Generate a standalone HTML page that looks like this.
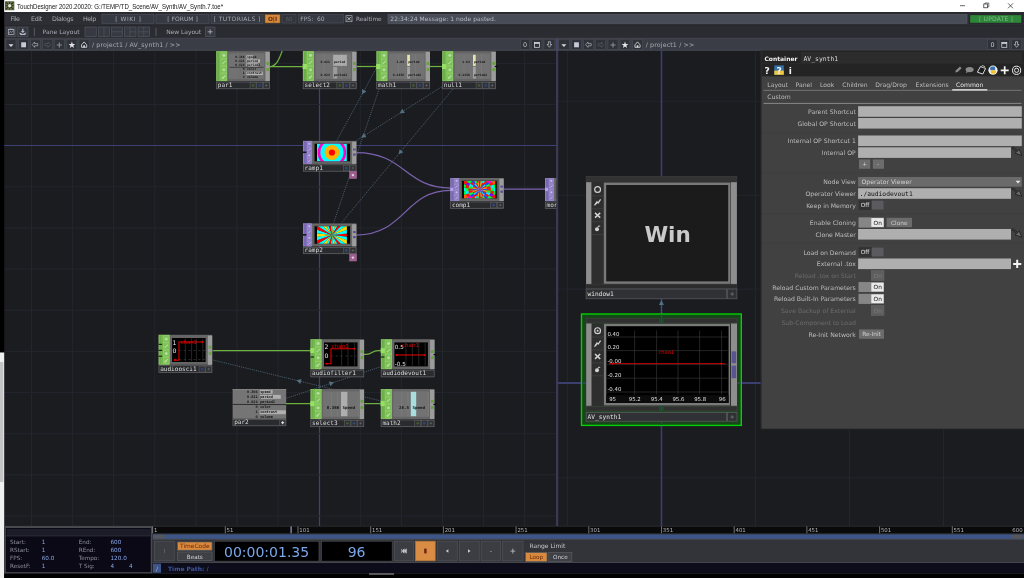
<!DOCTYPE html>
<html><head><meta charset="utf-8"><title>TouchDesigner</title>
<style>
html,body{margin:0;padding:0;background:#1b1c20;overflow:hidden}
svg{display:block;position:absolute;left:0;top:0;will-change:transform}
text{font-family:"DejaVu Sans","Liberation Sans",sans-serif;white-space:pre}
text.m{font-family:"DejaVu Sans Mono","Liberation Mono",monospace}
text.l{font-family:"Liberation Sans","DejaVu Sans",sans-serif}
</style></head><body>
<svg width="1024" height="578" viewBox="0 0 1024 578">
<rect x="0.00" y="0.00" width="1024.00" height="578.00" fill="#1b1c20" />
<g id="grid-left">
<line x1="31.50" y1="50.00" x2="31.50" y2="526.00" stroke="#24262e" stroke-width="1" />
<line x1="72.60" y1="50.00" x2="72.60" y2="526.00" stroke="#24262e" stroke-width="1" />
<line x1="113.70" y1="50.00" x2="113.70" y2="526.00" stroke="#24262e" stroke-width="1" />
<line x1="154.80" y1="50.00" x2="154.80" y2="526.00" stroke="#24262e" stroke-width="1" />
<line x1="195.90" y1="50.00" x2="195.90" y2="526.00" stroke="#24262e" stroke-width="1" />
<line x1="237.00" y1="50.00" x2="237.00" y2="526.00" stroke="#24262e" stroke-width="1" />
<line x1="278.10" y1="50.00" x2="278.10" y2="526.00" stroke="#24262e" stroke-width="1" />
<line x1="319.50" y1="50.00" x2="319.50" y2="526.00" stroke="#3f4078" stroke-width="1.2" />
<line x1="360.30" y1="50.00" x2="360.30" y2="526.00" stroke="#24262e" stroke-width="1" />
<line x1="401.40" y1="50.00" x2="401.40" y2="526.00" stroke="#24262e" stroke-width="1" />
<line x1="442.50" y1="50.00" x2="442.50" y2="526.00" stroke="#24262e" stroke-width="1" />
<line x1="483.60" y1="50.00" x2="483.60" y2="526.00" stroke="#24262e" stroke-width="1" />
<line x1="524.70" y1="50.00" x2="524.70" y2="526.00" stroke="#24262e" stroke-width="1" />
<line x1="4.00" y1="63.42" x2="557.00" y2="63.42" stroke="#24262e" stroke-width="1" />
<line x1="4.00" y1="104.56" x2="557.00" y2="104.56" stroke="#24262e" stroke-width="1" />
<line x1="4.00" y1="145.50" x2="557.00" y2="145.50" stroke="#3f4078" stroke-width="1.2" />
<line x1="4.00" y1="186.84" x2="557.00" y2="186.84" stroke="#24262e" stroke-width="1" />
<line x1="4.00" y1="227.98" x2="557.00" y2="227.98" stroke="#24262e" stroke-width="1" />
<line x1="4.00" y1="269.12" x2="557.00" y2="269.12" stroke="#24262e" stroke-width="1" />
<line x1="4.00" y1="310.26" x2="557.00" y2="310.26" stroke="#24262e" stroke-width="1" />
<line x1="4.00" y1="351.40" x2="557.00" y2="351.40" stroke="#24262e" stroke-width="1" />
<line x1="4.00" y1="392.54" x2="557.00" y2="392.54" stroke="#24262e" stroke-width="1" />
<line x1="4.00" y1="433.68" x2="557.00" y2="433.68" stroke="#24262e" stroke-width="1" />
<line x1="4.00" y1="474.82" x2="557.00" y2="474.82" stroke="#24262e" stroke-width="1" />
<line x1="4.00" y1="515.96" x2="557.00" y2="515.96" stroke="#24262e" stroke-width="1" />
</g>
<g id="grid-right">
<line x1="567.40" y1="50.00" x2="567.40" y2="526.00" stroke="#24262e" stroke-width="1" />
<line x1="755.40" y1="50.00" x2="755.40" y2="526.00" stroke="#24262e" stroke-width="1" />
<line x1="849.50" y1="50.00" x2="849.50" y2="526.00" stroke="#24262e" stroke-width="1" />
<line x1="943.50" y1="50.00" x2="943.50" y2="526.00" stroke="#24262e" stroke-width="1" />
<line x1="557.00" y1="101.20" x2="1024.00" y2="101.20" stroke="#24262e" stroke-width="1" />
<line x1="557.00" y1="195.30" x2="1024.00" y2="195.30" stroke="#24262e" stroke-width="1" />
<line x1="557.00" y1="289.10" x2="1024.00" y2="289.10" stroke="#24262e" stroke-width="1" />
<line x1="557.00" y1="477.80" x2="1024.00" y2="477.80" stroke="#24262e" stroke-width="1" />
<line x1="661.50" y1="50.00" x2="661.50" y2="526.00" stroke="#3b3f70" stroke-width="1.6" />
<line x1="557.00" y1="382.95" x2="1024.00" y2="382.95" stroke="#3b3f70" stroke-width="2" />
<rect x="556.00" y="50.00" width="2.20" height="476.00" fill="#3a3a55" />
</g>
<g id="network">
<line x1="377.00" y1="67.00" x2="336.30" y2="141.50" stroke="#4f6675" stroke-width="0.9" stroke-dasharray="1.1 1.1"/>
<polygon points="362.06,94.35 362.07,89.11 366.46,91.51" fill="#52707f"/>
<line x1="379.10" y1="89.00" x2="333.70" y2="222.70" stroke="#4f6675" stroke-width="0.9" stroke-dasharray="1.1 1.1"/>
<line x1="442.20" y1="86.50" x2="355.80" y2="141.00" stroke="#4f6675" stroke-width="0.9" stroke-dasharray="1.1 1.1"/>
<polygon points="399.65,113.34 402.20,108.77 404.87,113.00" fill="#52707f"/>
<polygon points="361.20,137.59 363.76,133.03 366.42,137.25" fill="#52707f"/>
<line x1="453.00" y1="89.00" x2="341.50" y2="222.70" stroke="#4f6675" stroke-width="0.9" stroke-dasharray="1.1 1.1"/>
<polygon points="398.56,154.27 399.59,149.14 403.43,152.34" fill="#52707f"/>
<line x1="381.00" y1="401.00" x2="213.00" y2="360.00" stroke="#4f6675" stroke-width="0.9" stroke-dasharray="1.1 1.1"/>
<polygon points="296.45,380.36 301.51,379.03 300.32,383.88" fill="#52707f"/>
<line x1="286.50" y1="398.20" x2="380.00" y2="367.00" stroke="#4f6675" stroke-width="0.9" stroke-dasharray="1.1 1.1"/>
<polygon points="334.03,382.34 330.46,386.17 328.87,381.42" fill="#52707f"/>
<line x1="661.40" y1="313.00" x2="661.40" y2="299.00" stroke="#4f6675" stroke-width="0.9" stroke-dasharray="1.1 1.1"/>
<polygon points="661.40,300.34 663.90,304.94 658.90,304.94" fill="#52707f"/>
<path d="M269.6 66.5 H303" fill="none" stroke="#6fb13f" stroke-width="1.25" stroke-linecap="butt"/>
<path d="M269.6 66.5 C276 66.5 279 60 282.3 50.6" fill="none" stroke="#6fb13f" stroke-width="1.25" stroke-linecap="butt"/>
<path d="M356.4 66.5 H376.5" fill="none" stroke="#6fb13f" stroke-width="1.25" stroke-linecap="butt"/>
<path d="M430 66.5 H442.3" fill="none" stroke="#6fb13f" stroke-width="1.25" stroke-linecap="butt"/>
<path d="M212.5 350.6 H310.6" fill="none" stroke="#6fb13f" stroke-width="1.25" stroke-linecap="butt"/>
<path d="M364 354.4 H366 C372.5 354.4 371.5 350.6 378 350.6 H381" fill="none" stroke="#6fb13f" stroke-width="1.25" stroke-linecap="butt"/>
<path d="M286 403.6 H310.6" fill="none" stroke="#6fb13f" stroke-width="1.25" stroke-linecap="butt"/>
<path d="M364.4 403.6 H380.8" fill="none" stroke="#6fb13f" stroke-width="1.25" stroke-linecap="butt"/>
<path d="M356.3 152.6 C405 152.6 405 188 450.5 188" fill="none" stroke="#7b63ae" stroke-width="1.25" stroke-linecap="butt"/>
<path d="M356.3 235 C405 235 405 190.3 450.5 190.3" fill="none" stroke="#7b63ae" stroke-width="1.25" stroke-linecap="butt"/>
<path d="M504 189.2 H545" fill="none" stroke="#7b63ae" stroke-width="1.25" stroke-linecap="butt"/>
<rect x="216.20" y="51.10" width="53.60" height="30.00" fill="#656565" />
<rect x="216.20" y="51.10" width="11.00" height="30.00" fill="#7ec058" />
<rect x="217.30" y="51.90" width="1.80" height="28.40" fill="#6aac46" />
<line x1="220.10" y1="51.10" x2="220.10" y2="81.10" stroke="#6aac46" stroke-width="0.6" />
<rect x="220.90" y="52.00" width="5.90" height="6.60" fill="none" stroke="#9ad474" stroke-width="0.45" />
<circle cx="223.85" cy="55.35" r="1.6" fill="#b4dc9c"/>
<rect x="220.90" y="59.20" width="5.90" height="6.60" fill="none" stroke="#9ad474" stroke-width="0.45" />
<path d="M222.25 64.05 L225.55 60.95" fill="none" stroke="#b4dc9c" stroke-width="1.1" />
<rect x="220.90" y="66.40" width="5.90" height="6.60" fill="none" stroke="#9ad474" stroke-width="0.45" />
<circle cx="223.85" cy="69.75" r="1.5" fill="#b4dc9c"/>
<rect x="220.90" y="73.60" width="5.90" height="6.60" fill="none" stroke="#9ad474" stroke-width="0.45" />
<path d="M222.35 78.45 L225.35 75.45" fill="none" stroke="#b4dc9c" stroke-width="1.3" />
<circle cx="223.05" cy="77.75" r="1" fill="#b4dc9c"/>
<rect x="265.40" y="51.90" width="4.40" height="29.20" fill="#9c9c9c" />
<rect x="266.30" y="62.00" width="2.80" height="2.90" fill="#69a140" />
<rect x="266.30" y="68.10" width="2.80" height="3.00" fill="#69a140" />
<rect x="228.80" y="53.50" width="35.60" height="25.40" fill="#727272" />
<rect x="216.50" y="82.00" width="53.00" height="6.80" fill="#2a2b2e" stroke="#68696c" stroke-width="0.7" />
<rect x="250.10" y="82.40" width="6.00" height="6.00" fill="#303134" stroke="#5c5d60" stroke-width="0.6" />
<circle cx="253.10" cy="85.40" r="1.35" fill="#3f5a2e"/>
<rect x="256.70" y="82.40" width="6.00" height="6.00" fill="#303134" stroke="#5c5d60" stroke-width="0.6" />
<circle cx="259.70" cy="85.40" r="1.35" fill="#2c467c"/>
<rect x="263.30" y="82.40" width="6.00" height="6.00" fill="#303134" stroke="#5c5d60" stroke-width="0.6" />
<path d="M266.30 84.10 V86.70 M265.00 85.40 H267.60" fill="none" stroke="#6e6f73" stroke-width="0.6" />
<text x="217.80" y="87.30" fill="#dcdcdc" text-anchor="start" class="m" style="font-size:6.05px;" >par1</text>
<rect x="246.40" y="55.30" width="6.70" height="3.30" fill="#b4b4b4" />
<text x="244.60" y="57.90" fill="#141414" text-anchor="end" class="m" style="font-size:3.1px;font-weight:bold;" >0.366</text>
<text x="247.00" y="57.90" fill="#141414" text-anchor="start" class="m" style="font-size:3.1px;font-weight:bold;" >speed</text>
<rect x="246.40" y="59.30" width="13.60" height="3.30" fill="#b4b4b4" />
<text x="244.60" y="61.90" fill="#141414" text-anchor="end" class="m" style="font-size:3.1px;font-weight:bold;" >0.821</text>
<text x="247.00" y="61.90" fill="#141414" text-anchor="start" class="m" style="font-size:3.1px;font-weight:bold;" >period</text>
<rect x="246.40" y="63.30" width="12.00" height="3.30" fill="#b4b4b4" />
<text x="244.60" y="65.90" fill="#141414" text-anchor="end" class="m" style="font-size:3.1px;font-weight:bold;" >0.024</text>
<text x="247.00" y="65.90" fill="#141414" text-anchor="start" class="m" style="font-size:3.1px;font-weight:bold;" >period2</text>
<line x1="229.50" y1="67.30" x2="263.50" y2="67.30" stroke="#1a1a1a" stroke-width="0.6" />
<text x="244.60" y="70.20" fill="#141414" text-anchor="end" class="m" style="font-size:3.1px;font-weight:bold;" >0</text>
<text x="247.00" y="70.20" fill="#141414" text-anchor="start" class="m" style="font-size:3.1px;font-weight:bold;" >color</text>
<rect x="246.40" y="71.70" width="16.40" height="3.30" fill="#b4b4b4" />
<text x="244.60" y="74.30" fill="#141414" text-anchor="end" class="m" style="font-size:3.1px;font-weight:bold;" >1</text>
<text x="247.00" y="74.30" fill="#141414" text-anchor="start" class="m" style="font-size:3.1px;font-weight:bold;" >contrast</text>
<text x="244.60" y="78.00" fill="#141414" text-anchor="end" class="m" style="font-size:3.1px;font-weight:bold;" >0</text>
<text x="247.00" y="78.00" fill="#141414" text-anchor="start" class="m" style="font-size:3.1px;font-weight:bold;" >volume</text>
<line x1="240.20" y1="53.60" x2="240.20" y2="79.00" stroke="#6a6a6a" stroke-width="0.5" />
<rect x="302.90" y="51.10" width="53.60" height="30.00" fill="#656565" />
<rect x="302.90" y="51.10" width="11.00" height="30.00" fill="#7ec058" />
<rect x="304.00" y="51.90" width="1.80" height="28.40" fill="#6aac46" />
<line x1="306.80" y1="51.10" x2="306.80" y2="81.10" stroke="#6aac46" stroke-width="0.6" />
<rect x="307.60" y="52.00" width="5.90" height="6.60" fill="none" stroke="#9ad474" stroke-width="0.45" />
<circle cx="310.55" cy="55.35" r="1.6" fill="#b4dc9c"/>
<rect x="307.60" y="59.20" width="5.90" height="6.60" fill="none" stroke="#9ad474" stroke-width="0.45" />
<path d="M308.95 64.05 L312.25 60.95" fill="none" stroke="#b4dc9c" stroke-width="1.1" />
<rect x="307.60" y="66.40" width="5.90" height="6.60" fill="none" stroke="#9ad474" stroke-width="0.45" />
<circle cx="310.55" cy="69.75" r="1.5" fill="#b4dc9c"/>
<rect x="307.60" y="73.60" width="5.90" height="6.60" fill="none" stroke="#9ad474" stroke-width="0.45" />
<path d="M309.05 78.45 L312.05 75.45" fill="none" stroke="#b4dc9c" stroke-width="1.3" />
<circle cx="309.75" cy="77.75" r="1" fill="#b4dc9c"/>
<rect x="352.10" y="51.90" width="4.40" height="29.20" fill="#9c9c9c" />
<rect x="353.00" y="62.00" width="2.80" height="2.90" fill="#69a140" />
<rect x="353.00" y="68.10" width="2.80" height="3.00" fill="#69a140" />
<rect x="315.50" y="53.50" width="35.60" height="25.40" fill="#727272" />
<rect x="302.70" y="64.00" width="4.20" height="5.00" fill="#96e066" />
<rect x="303.20" y="82.00" width="53.00" height="6.80" fill="#2a2b2e" stroke="#68696c" stroke-width="0.7" />
<rect x="336.80" y="82.40" width="6.00" height="6.00" fill="#303134" stroke="#5c5d60" stroke-width="0.6" />
<circle cx="339.80" cy="85.40" r="1.35" fill="#3f5a2e"/>
<rect x="343.40" y="82.40" width="6.00" height="6.00" fill="#303134" stroke="#5c5d60" stroke-width="0.6" />
<circle cx="346.40" cy="85.40" r="1.35" fill="#2c467c"/>
<rect x="350.00" y="82.40" width="6.00" height="6.00" fill="#303134" stroke="#5c5d60" stroke-width="0.6" />
<path d="M353.00 84.10 V86.70 M351.70 85.40 H354.30" fill="none" stroke="#6e6f73" stroke-width="0.6" />
<text x="304.50" y="87.30" fill="#dcdcdc" text-anchor="start" class="m" style="font-size:6.05px;" >select2</text>
<line x1="324.20" y1="54.00" x2="324.20" y2="79.00" stroke="#838383" stroke-width="0.5" />
<line x1="341.50" y1="54.00" x2="341.50" y2="79.00" stroke="#838383" stroke-width="0.5" />
<rect x="333.10" y="54.80" width="13.80" height="11.10" fill="#a9a9a9" />
<rect x="333.10" y="67.00" width="4.10" height="11.60" fill="#9c9c9c" />
<line x1="341.50" y1="54.80" x2="341.50" y2="65.90" stroke="#b6b6b6" stroke-width="0.5" />
<text x="329.80" y="63.30" fill="#141414" text-anchor="end" class="m" style="font-size:3.1px;font-weight:bold;" >0.821</text>
<text x="334.00" y="63.30" fill="#141414" text-anchor="start" class="m" style="font-size:3.1px;font-weight:bold;" >period</text>
<text x="329.80" y="75.50" fill="#141414" text-anchor="end" class="m" style="font-size:3.1px;font-weight:bold;" >0.024</text>
<text x="334.00" y="75.50" fill="#141414" text-anchor="start" class="m" style="font-size:3.1px;font-weight:bold;" >period2</text>
<rect x="376.40" y="51.10" width="53.60" height="30.00" fill="#656565" />
<rect x="376.40" y="51.10" width="11.00" height="30.00" fill="#7ec058" />
<rect x="377.50" y="51.90" width="1.80" height="28.40" fill="#6aac46" />
<line x1="380.30" y1="51.10" x2="380.30" y2="81.10" stroke="#6aac46" stroke-width="0.6" />
<rect x="381.10" y="52.00" width="5.90" height="6.60" fill="none" stroke="#9ad474" stroke-width="0.45" />
<circle cx="384.05" cy="55.35" r="1.6" fill="#b4dc9c"/>
<rect x="381.10" y="59.20" width="5.90" height="6.60" fill="none" stroke="#9ad474" stroke-width="0.45" />
<path d="M382.45 64.05 L385.75 60.95" fill="none" stroke="#b4dc9c" stroke-width="1.1" />
<rect x="381.10" y="66.40" width="5.90" height="6.60" fill="none" stroke="#9ad474" stroke-width="0.45" />
<circle cx="384.05" cy="69.75" r="1.5" fill="#b4dc9c"/>
<rect x="381.10" y="73.60" width="5.90" height="6.60" fill="none" stroke="#9ad474" stroke-width="0.45" />
<path d="M382.55 78.45 L385.55 75.45" fill="none" stroke="#b4dc9c" stroke-width="1.3" />
<circle cx="383.25" cy="77.75" r="1" fill="#b4dc9c"/>
<rect x="425.60" y="51.90" width="4.40" height="29.20" fill="#9c9c9c" />
<rect x="426.50" y="62.00" width="2.80" height="2.90" fill="#69a140" />
<rect x="426.50" y="68.10" width="2.80" height="3.00" fill="#69a140" />
<rect x="389.00" y="53.50" width="35.60" height="25.40" fill="#727272" />
<rect x="376.20" y="64.00" width="4.20" height="5.00" fill="#96e066" />
<rect x="376.70" y="82.00" width="53.00" height="6.80" fill="#2a2b2e" stroke="#68696c" stroke-width="0.7" />
<rect x="410.30" y="82.40" width="6.00" height="6.00" fill="#303134" stroke="#5c5d60" stroke-width="0.6" />
<circle cx="413.30" cy="85.40" r="1.35" fill="#3f5a2e"/>
<rect x="416.90" y="82.40" width="6.00" height="6.00" fill="#303134" stroke="#5c5d60" stroke-width="0.6" />
<circle cx="419.90" cy="85.40" r="1.35" fill="#2c467c"/>
<rect x="423.50" y="82.40" width="6.00" height="6.00" fill="#303134" stroke="#5c5d60" stroke-width="0.6" />
<path d="M426.50 84.10 V86.70 M425.20 85.40 H427.80" fill="none" stroke="#6e6f73" stroke-width="0.6" />
<text x="378.00" y="87.30" fill="#dcdcdc" text-anchor="start" class="m" style="font-size:6.05px;" >math1</text>
<line x1="398.20" y1="54.00" x2="398.20" y2="79.00" stroke="#838383" stroke-width="0.5" />
<line x1="415.60" y1="54.00" x2="415.60" y2="79.00" stroke="#838383" stroke-width="0.5" />
<rect x="407.20" y="54.80" width="2.70" height="11.10" fill="#e6e3b2" />
<rect x="407.20" y="66.80" width="2.70" height="11.80" fill="#a2a2a2" />
<text x="404.00" y="63.30" fill="#141414" text-anchor="end" class="m" style="font-size:3.1px;font-weight:bold;" >1.64</text>
<text x="408.20" y="63.30" fill="#141414" text-anchor="start" class="m" style="font-size:3.1px;font-weight:bold;" >period</text>
<text x="404.00" y="75.50" fill="#141414" text-anchor="end" class="m" style="font-size:3.1px;font-weight:bold;" >0.1436</text>
<text x="408.20" y="75.50" fill="#141414" text-anchor="start" class="m" style="font-size:3.1px;font-weight:bold;" >period2</text>
<rect x="442.20" y="51.10" width="53.60" height="30.00" fill="#656565" />
<rect x="442.20" y="51.10" width="11.00" height="30.00" fill="#7ec058" />
<rect x="443.30" y="51.90" width="1.80" height="28.40" fill="#6aac46" />
<line x1="446.10" y1="51.10" x2="446.10" y2="81.10" stroke="#6aac46" stroke-width="0.6" />
<rect x="446.90" y="52.00" width="5.90" height="6.60" fill="none" stroke="#9ad474" stroke-width="0.45" />
<circle cx="449.85" cy="55.35" r="1.6" fill="#b4dc9c"/>
<rect x="446.90" y="59.20" width="5.90" height="6.60" fill="none" stroke="#9ad474" stroke-width="0.45" />
<path d="M448.25 64.05 L451.55 60.95" fill="none" stroke="#b4dc9c" stroke-width="1.1" />
<rect x="446.90" y="66.40" width="5.90" height="6.60" fill="none" stroke="#9ad474" stroke-width="0.45" />
<circle cx="449.85" cy="69.75" r="1.5" fill="#b4dc9c"/>
<rect x="446.90" y="73.60" width="5.90" height="6.60" fill="none" stroke="#9ad474" stroke-width="0.45" />
<path d="M448.35 78.45 L451.35 75.45" fill="none" stroke="#b4dc9c" stroke-width="1.3" />
<circle cx="449.05" cy="77.75" r="1" fill="#b4dc9c"/>
<rect x="491.40" y="51.90" width="4.40" height="29.20" fill="#9c9c9c" />
<rect x="492.30" y="62.00" width="2.80" height="2.90" fill="#69a140" />
<rect x="492.30" y="68.10" width="2.80" height="3.00" fill="#69a140" />
<rect x="454.80" y="53.50" width="35.60" height="25.40" fill="#727272" />
<rect x="442.00" y="64.00" width="4.20" height="5.00" fill="#96e066" />
<line x1="494.80" y1="66.50" x2="498.00" y2="66.50" stroke="#0a0a0a" stroke-width="1.1" />
<rect x="442.50" y="82.00" width="53.00" height="6.80" fill="#2a2b2e" stroke="#68696c" stroke-width="0.7" />
<rect x="476.10" y="82.40" width="6.00" height="6.00" fill="#303134" stroke="#5c5d60" stroke-width="0.6" />
<circle cx="479.10" cy="85.40" r="1.35" fill="#3f5a2e"/>
<rect x="482.70" y="82.40" width="6.00" height="6.00" fill="#303134" stroke="#5c5d60" stroke-width="0.6" />
<circle cx="485.70" cy="85.40" r="1.35" fill="#2c467c"/>
<rect x="489.30" y="82.40" width="6.00" height="6.00" fill="#303134" stroke="#5c5d60" stroke-width="0.6" />
<path d="M492.30 84.10 V86.70 M491.00 85.40 H493.60" fill="none" stroke="#6e6f73" stroke-width="0.6" />
<text x="443.80" y="87.30" fill="#dcdcdc" text-anchor="start" class="m" style="font-size:6.05px;" >null1</text>
<line x1="464.00" y1="54.00" x2="464.00" y2="79.00" stroke="#838383" stroke-width="0.5" />
<line x1="481.40" y1="54.00" x2="481.40" y2="79.00" stroke="#838383" stroke-width="0.5" />
<rect x="473.00" y="54.80" width="2.70" height="11.10" fill="#e6e3b2" />
<rect x="473.00" y="66.80" width="2.70" height="11.80" fill="#a2a2a2" />
<text x="469.80" y="63.30" fill="#141414" text-anchor="end" class="m" style="font-size:3.1px;font-weight:bold;" >1.64</text>
<text x="474.00" y="63.30" fill="#141414" text-anchor="start" class="m" style="font-size:3.1px;font-weight:bold;" >period</text>
<text x="469.80" y="75.50" fill="#141414" text-anchor="end" class="m" style="font-size:3.1px;font-weight:bold;" >0.1436</text>
<text x="474.00" y="75.50" fill="#141414" text-anchor="start" class="m" style="font-size:3.1px;font-weight:bold;" >period2</text>
<rect x="158.60" y="334.80" width="53.60" height="30.00" fill="#656565" />
<rect x="158.60" y="334.80" width="11.00" height="30.00" fill="#7ec058" />
<rect x="159.70" y="335.60" width="1.80" height="28.40" fill="#6aac46" />
<line x1="162.50" y1="334.80" x2="162.50" y2="364.80" stroke="#6aac46" stroke-width="0.6" />
<rect x="163.30" y="335.70" width="5.90" height="6.60" fill="none" stroke="#9ad474" stroke-width="0.45" />
<circle cx="166.25" cy="339.05" r="1.6" fill="#b4dc9c"/>
<rect x="163.30" y="342.90" width="5.90" height="6.60" fill="none" stroke="#9ad474" stroke-width="0.45" />
<path d="M164.65 347.75 L167.95 344.65" fill="none" stroke="#b4dc9c" stroke-width="1.1" />
<rect x="163.30" y="350.10" width="5.90" height="6.60" fill="none" stroke="#9ad474" stroke-width="0.45" />
<circle cx="166.25" cy="353.45" r="1.5" fill="#b4dc9c"/>
<rect x="163.30" y="357.30" width="5.90" height="6.60" fill="none" stroke="#9ad474" stroke-width="0.45" />
<path d="M164.75 362.15 L167.75 359.15" fill="none" stroke="#b4dc9c" stroke-width="1.3" />
<circle cx="165.45" cy="361.45" r="1" fill="#b4dc9c"/>
<rect x="207.80" y="335.60" width="4.40" height="29.20" fill="#9c9c9c" />
<rect x="208.70" y="345.70" width="2.80" height="2.90" fill="#69a140" />
<rect x="208.70" y="351.80" width="2.80" height="3.00" fill="#69a140" />
<rect x="172.10" y="338.00" width="33.50" height="24.00" fill="#000" />
<line x1="158.60" y1="344.30" x2="162.20" y2="344.30" stroke="#0a0a0a" stroke-width="1" />
<line x1="158.60" y1="350.30" x2="162.20" y2="350.30" stroke="#0a0a0a" stroke-width="1" />
<line x1="158.60" y1="356.20" x2="162.20" y2="356.20" stroke="#0a0a0a" stroke-width="1" />
<rect x="158.90" y="365.70" width="53.00" height="6.80" fill="#2a2b2e" stroke="#68696c" stroke-width="0.7" />
<rect x="199.10" y="366.10" width="6.00" height="6.00" fill="#303134" stroke="#5c5d60" stroke-width="0.6" />
<circle cx="202.10" cy="369.10" r="1.35" fill="#2c467c"/>
<rect x="205.70" y="366.10" width="6.00" height="6.00" fill="#303134" stroke="#5c5d60" stroke-width="0.6" />
<path d="M208.70 367.80 V370.40 M207.40 369.10 H210.00" fill="none" stroke="#6e6f73" stroke-width="0.6" />
<text x="160.20" y="371.00" fill="#dcdcdc" text-anchor="start" class="m" style="font-size:6.05px;" >audioosci1</text>
<line x1="185.30" y1="338.60" x2="185.30" y2="361.40" stroke="#4a4a4a" stroke-width="0.5" />
<line x1="191.60" y1="338.60" x2="191.60" y2="361.40" stroke="#4a4a4a" stroke-width="0.5" />
<line x1="196.40" y1="338.60" x2="196.40" y2="361.40" stroke="#4a4a4a" stroke-width="0.5" />
<line x1="202.80" y1="338.60" x2="202.80" y2="361.40" stroke="#4a4a4a" stroke-width="0.5" />
<line x1="174.00" y1="350.60" x2="205.00" y2="350.60" stroke="#4a4a4a" stroke-width="0.5" stroke-dasharray="2.6 2.2"/>
<line x1="174.00" y1="359.60" x2="205.00" y2="359.60" stroke="#4a4a4a" stroke-width="0.5" stroke-dasharray="2.6 2.2"/>
<text x="174.50" y="344.80" fill="#e8e8e8" text-anchor="middle" style="font-size:6.2px;" >1</text>
<text x="174.50" y="353.00" fill="#e8e8e8" text-anchor="middle" style="font-size:6.2px;" >0</text>
<path d="M174.5 360.1 H179 V342 H202.4" fill="none" stroke="#e00000" stroke-width="1.1" />
<circle cx="174.5" cy="360.1" r="1" fill="#e00000"/><circle cx="202.4" cy="342" r="1" fill="#e00000"/>
<text x="180.50" y="343.60" fill="#e00000" text-anchor="start" style="font-size:5.4px;" >chan1</text>
<rect x="310.50" y="339.20" width="53.60" height="30.00" fill="#656565" />
<rect x="310.50" y="339.20" width="11.00" height="30.00" fill="#7ec058" />
<rect x="311.60" y="340.00" width="1.80" height="28.40" fill="#6aac46" />
<line x1="314.40" y1="339.20" x2="314.40" y2="369.20" stroke="#6aac46" stroke-width="0.6" />
<rect x="315.20" y="340.10" width="5.90" height="6.60" fill="none" stroke="#9ad474" stroke-width="0.45" />
<circle cx="318.15" cy="343.45" r="1.6" fill="#b4dc9c"/>
<rect x="315.20" y="347.30" width="5.90" height="6.60" fill="none" stroke="#9ad474" stroke-width="0.45" />
<path d="M316.55 352.15 L319.85 349.05" fill="none" stroke="#b4dc9c" stroke-width="1.1" />
<rect x="315.20" y="354.50" width="5.90" height="6.60" fill="none" stroke="#9ad474" stroke-width="0.45" />
<circle cx="318.15" cy="357.85" r="1.5" fill="#b4dc9c"/>
<rect x="315.20" y="361.70" width="5.90" height="6.60" fill="none" stroke="#9ad474" stroke-width="0.45" />
<path d="M316.65 366.55 L319.65 363.55" fill="none" stroke="#b4dc9c" stroke-width="1.3" />
<circle cx="317.35" cy="365.85" r="1" fill="#b4dc9c"/>
<rect x="359.70" y="340.00" width="4.40" height="29.20" fill="#9c9c9c" />
<rect x="360.60" y="350.10" width="2.80" height="2.90" fill="#69a140" />
<rect x="360.60" y="356.20" width="2.80" height="3.00" fill="#69a140" />
<rect x="324.00" y="342.40" width="33.50" height="24.00" fill="#000" />
<rect x="310.30" y="348.10" width="4.20" height="5.00" fill="#96e066" />
<line x1="310.50" y1="357.00" x2="314.10" y2="357.00" stroke="#0a0a0a" stroke-width="1" />
<rect x="310.80" y="370.10" width="53.00" height="6.80" fill="#2a2b2e" stroke="#68696c" stroke-width="0.7" />
<text x="312.10" y="375.40" fill="#dcdcdc" text-anchor="start" class="m" style="font-size:6.05px;" >audiofilter1</text>
<line x1="341.60" y1="343.00" x2="341.60" y2="365.70" stroke="#4a4a4a" stroke-width="0.5" />
<line x1="348.00" y1="343.00" x2="348.00" y2="365.70" stroke="#4a4a4a" stroke-width="0.5" />
<line x1="354.60" y1="343.00" x2="354.60" y2="365.70" stroke="#4a4a4a" stroke-width="0.5" />
<line x1="326.00" y1="356.00" x2="356.50" y2="356.00" stroke="#4a4a4a" stroke-width="0.5" stroke-dasharray="2.6 2.2"/>
<text x="326.40" y="349.40" fill="#e8e8e8" text-anchor="middle" style="font-size:6.2px;" >2</text>
<text x="326.40" y="358.40" fill="#e8e8e8" text-anchor="middle" style="font-size:6.2px;" >0</text>
<path d="M326.4 363.8 H331 V348.8 H354.2" fill="none" stroke="#e00000" stroke-width="1.1" />
<circle cx="326.4" cy="363.8" r="1" fill="#e00000"/><circle cx="354.2" cy="348.8" r="1" fill="#e00000"/>
<text x="331.60" y="347.60" fill="#e00000" text-anchor="start" style="font-size:5.6px;" >chan1</text>
<rect x="380.90" y="339.20" width="53.60" height="30.00" fill="#656565" />
<rect x="380.90" y="339.20" width="11.00" height="30.00" fill="#7ec058" />
<rect x="382.00" y="340.00" width="1.80" height="28.40" fill="#6aac46" />
<line x1="384.80" y1="339.20" x2="384.80" y2="369.20" stroke="#6aac46" stroke-width="0.6" />
<rect x="385.60" y="340.10" width="5.90" height="6.60" fill="none" stroke="#9ad474" stroke-width="0.45" />
<circle cx="388.55" cy="343.45" r="1.6" fill="#b4dc9c"/>
<rect x="385.60" y="347.30" width="5.90" height="6.60" fill="none" stroke="#9ad474" stroke-width="0.45" />
<path d="M386.95 352.15 L390.25 349.05" fill="none" stroke="#b4dc9c" stroke-width="1.1" />
<rect x="385.60" y="354.50" width="5.90" height="6.60" fill="none" stroke="#9ad474" stroke-width="0.45" />
<circle cx="388.55" cy="357.85" r="1.5" fill="#b4dc9c"/>
<rect x="385.60" y="361.70" width="5.90" height="6.60" fill="none" stroke="#9ad474" stroke-width="0.45" />
<path d="M387.05 366.55 L390.05 363.55" fill="none" stroke="#b4dc9c" stroke-width="1.3" />
<circle cx="387.75" cy="365.85" r="1" fill="#b4dc9c"/>
<rect x="430.10" y="340.00" width="4.40" height="29.20" fill="#9c9c9c" />
<rect x="431.00" y="350.10" width="2.80" height="2.90" fill="#69a140" />
<rect x="431.00" y="356.20" width="2.80" height="3.00" fill="#69a140" />
<rect x="394.40" y="342.40" width="33.50" height="24.00" fill="#000" />
<rect x="380.70" y="348.10" width="4.20" height="5.00" fill="#96e066" />
<line x1="380.90" y1="357.00" x2="384.50" y2="357.00" stroke="#0a0a0a" stroke-width="1" />
<line x1="433.50" y1="354.60" x2="436.70" y2="354.60" stroke="#0a0a0a" stroke-width="1.1" />
<rect x="381.20" y="370.10" width="53.00" height="6.80" fill="#2a2b2e" stroke="#68696c" stroke-width="0.7" />
<text x="382.50" y="375.40" fill="#dcdcdc" text-anchor="start" class="m" style="font-size:6.05px;" >audiodevout1</text>
<line x1="406.00" y1="343.00" x2="406.00" y2="365.70" stroke="#4a4a4a" stroke-width="0.5" />
<line x1="412.40" y1="343.00" x2="412.40" y2="365.70" stroke="#4a4a4a" stroke-width="0.5" />
<line x1="418.80" y1="343.00" x2="418.80" y2="365.70" stroke="#4a4a4a" stroke-width="0.5" />
<line x1="425.20" y1="343.00" x2="425.20" y2="365.70" stroke="#4a4a4a" stroke-width="0.5" />
<text x="394.80" y="348.60" fill="#e8e8e8" text-anchor="start" style="font-size:5.6px;" >0.5</text>
<text x="394.80" y="366.00" fill="#e8e8e8" text-anchor="start" style="font-size:5.6px;" >-0.5</text>
<path d="M396.6 355 H424.4" fill="none" stroke="#e00000" stroke-width="1.1" />
<circle cx="396.6" cy="355" r="1.1" fill="#e00000"/><circle cx="424.4" cy="355" r="1" fill="#e00000"/>
<text x="402.00" y="347.20" fill="#e00000" text-anchor="start" style="font-size:5.6px;" >chan1</text>
<rect x="232.60" y="389.00" width="53.60" height="29.80" fill="#757575" />
<rect x="232.60" y="389.00" width="53.60" height="0.70" fill="#8a8a8a" />
<rect x="259.60" y="389.90" width="13.00" height="3.90" fill="#b0b0b0" />
<text x="257.60" y="392.90" fill="#141414" text-anchor="end" class="m" style="font-size:3.5px;font-weight:bold;" >0.366</text>
<text x="260.20" y="392.90" fill="#141414" text-anchor="start" class="m" style="font-size:3.5px;font-weight:bold;" >speed</text>
<rect x="259.60" y="394.90" width="21.20" height="3.90" fill="#b0b0b0" />
<text x="257.60" y="397.90" fill="#141414" text-anchor="end" class="m" style="font-size:3.5px;font-weight:bold;" >0.821</text>
<text x="260.20" y="397.90" fill="#141414" text-anchor="start" class="m" style="font-size:3.5px;font-weight:bold;" >period</text>
<text x="257.60" y="402.80" fill="#141414" text-anchor="end" class="m" style="font-size:3.5px;font-weight:bold;" >0.024</text>
<text x="260.20" y="402.80" fill="#141414" text-anchor="start" class="m" style="font-size:3.5px;font-weight:bold;" >period2</text>
<line x1="232.60" y1="404.40" x2="286.20" y2="404.60" stroke="#1c1c1c" stroke-width="0.8" />
<text x="257.60" y="408.00" fill="#141414" text-anchor="end" class="m" style="font-size:3.5px;font-weight:bold;" >0</text>
<text x="260.20" y="408.00" fill="#141414" text-anchor="start" class="m" style="font-size:3.5px;font-weight:bold;" >color</text>
<rect x="259.60" y="410.30" width="26.20" height="3.90" fill="#b0b0b0" />
<text x="257.60" y="413.30" fill="#141414" text-anchor="end" class="m" style="font-size:3.5px;font-weight:bold;" >1</text>
<text x="260.20" y="413.30" fill="#141414" text-anchor="start" class="m" style="font-size:3.5px;font-weight:bold;" >contrast</text>
<text x="257.60" y="418.10" fill="#141414" text-anchor="end" class="m" style="font-size:3.5px;font-weight:bold;" >0</text>
<text x="260.20" y="418.10" fill="#141414" text-anchor="start" class="m" style="font-size:3.5px;font-weight:bold;" >volume</text>
<line x1="259.20" y1="389.60" x2="258.30" y2="418.40" stroke="#686868" stroke-width="0.5" />
<rect x="232.90" y="419.60" width="53.00" height="6.20" fill="#2a2b2e" stroke="#68696c" stroke-width="0.7" />
<rect x="279.70" y="420.00" width="6.00" height="5.40" fill="#303134" stroke="#5c5d60" stroke-width="0.6" />
<path d="M282.70 421.20 V424.20 M281.20 422.70 H284.20" fill="none" stroke="#f0f0f0" stroke-width="1" />
<text x="234.20" y="424.30" fill="#dcdcdc" text-anchor="start" class="m" style="font-size:6.05px;" >par2</text>
<rect x="310.50" y="389.00" width="53.60" height="30.00" fill="#656565" />
<rect x="310.50" y="389.00" width="11.00" height="30.00" fill="#7ec058" />
<rect x="311.60" y="389.80" width="1.80" height="28.40" fill="#6aac46" />
<line x1="314.40" y1="389.00" x2="314.40" y2="419.00" stroke="#6aac46" stroke-width="0.6" />
<rect x="315.20" y="389.90" width="5.90" height="6.60" fill="none" stroke="#9ad474" stroke-width="0.45" />
<circle cx="318.15" cy="393.25" r="1.6" fill="#b4dc9c"/>
<rect x="315.20" y="397.10" width="5.90" height="6.60" fill="none" stroke="#9ad474" stroke-width="0.45" />
<path d="M316.55 401.95 L319.85 398.85" fill="none" stroke="#b4dc9c" stroke-width="1.1" />
<rect x="315.20" y="404.30" width="5.90" height="6.60" fill="none" stroke="#9ad474" stroke-width="0.45" />
<circle cx="318.15" cy="407.65" r="1.5" fill="#b4dc9c"/>
<rect x="315.20" y="411.50" width="5.90" height="6.60" fill="none" stroke="#9ad474" stroke-width="0.45" />
<path d="M316.65 416.35 L319.65 413.35" fill="none" stroke="#b4dc9c" stroke-width="1.3" />
<circle cx="317.35" cy="415.65" r="1" fill="#b4dc9c"/>
<rect x="359.70" y="389.80" width="4.40" height="29.20" fill="#9c9c9c" />
<rect x="360.60" y="399.90" width="2.80" height="2.90" fill="#69a140" />
<rect x="360.60" y="406.00" width="2.80" height="3.00" fill="#69a140" />
<rect x="323.10" y="391.40" width="35.60" height="25.40" fill="#727272" />
<rect x="310.30" y="401.10" width="4.20" height="5.00" fill="#96e066" />
<rect x="310.80" y="419.90" width="53.00" height="6.80" fill="#2a2b2e" stroke="#68696c" stroke-width="0.7" />
<rect x="344.40" y="420.30" width="6.00" height="6.00" fill="#303134" stroke="#5c5d60" stroke-width="0.6" />
<circle cx="347.40" cy="423.30" r="1.35" fill="#3f5a2e"/>
<rect x="351.00" y="420.30" width="6.00" height="6.00" fill="#303134" stroke="#5c5d60" stroke-width="0.6" />
<circle cx="354.00" cy="423.30" r="1.35" fill="#2c467c"/>
<rect x="357.60" y="420.30" width="6.00" height="6.00" fill="#303134" stroke="#5c5d60" stroke-width="0.6" />
<path d="M360.60 422.00 V424.60 M359.30 423.30 H361.90" fill="none" stroke="#6e6f73" stroke-width="0.6" />
<text x="312.10" y="425.20" fill="#dcdcdc" text-anchor="start" class="m" style="font-size:6.05px;" >select3</text>
<line x1="331.30" y1="392.00" x2="331.30" y2="416.50" stroke="#858585" stroke-width="0.5" />
<line x1="337.60" y1="392.00" x2="337.60" y2="416.50" stroke="#858585" stroke-width="0.5" />
<line x1="358.20" y1="392.00" x2="358.20" y2="416.50" stroke="#858585" stroke-width="0.5" />
<rect x="341.00" y="391.80" width="6.40" height="24.40" fill="#aeaeae" />
<text x="339.20" y="409.30" fill="#141414" text-anchor="end" class="m" style="font-size:4.1px;font-weight:bold;" >0.366</text>
<text x="342.60" y="409.30" fill="#141414" text-anchor="start" class="m" style="font-size:4.1px;font-weight:bold;" >Speed</text>
<rect x="380.80" y="389.00" width="53.60" height="30.00" fill="#656565" />
<rect x="380.80" y="389.00" width="11.00" height="30.00" fill="#7ec058" />
<rect x="381.90" y="389.80" width="1.80" height="28.40" fill="#6aac46" />
<line x1="384.70" y1="389.00" x2="384.70" y2="419.00" stroke="#6aac46" stroke-width="0.6" />
<rect x="385.50" y="389.90" width="5.90" height="6.60" fill="none" stroke="#9ad474" stroke-width="0.45" />
<circle cx="388.45" cy="393.25" r="1.6" fill="#b4dc9c"/>
<rect x="385.50" y="397.10" width="5.90" height="6.60" fill="none" stroke="#9ad474" stroke-width="0.45" />
<path d="M386.85 401.95 L390.15 398.85" fill="none" stroke="#b4dc9c" stroke-width="1.1" />
<rect x="385.50" y="404.30" width="5.90" height="6.60" fill="none" stroke="#9ad474" stroke-width="0.45" />
<circle cx="388.45" cy="407.65" r="1.5" fill="#b4dc9c"/>
<rect x="385.50" y="411.50" width="5.90" height="6.60" fill="none" stroke="#9ad474" stroke-width="0.45" />
<path d="M386.95 416.35 L389.95 413.35" fill="none" stroke="#b4dc9c" stroke-width="1.3" />
<circle cx="387.65" cy="415.65" r="1" fill="#b4dc9c"/>
<rect x="430.00" y="389.80" width="4.40" height="29.20" fill="#9c9c9c" />
<rect x="430.90" y="399.90" width="2.80" height="2.90" fill="#69a140" />
<rect x="430.90" y="406.00" width="2.80" height="3.00" fill="#69a140" />
<rect x="393.40" y="391.40" width="35.60" height="25.40" fill="#727272" />
<rect x="380.60" y="401.10" width="4.20" height="5.00" fill="#96e066" />
<line x1="433.40" y1="404.40" x2="436.60" y2="404.40" stroke="#0a0a0a" stroke-width="1.1" />
<rect x="381.10" y="419.90" width="53.00" height="6.80" fill="#2a2b2e" stroke="#68696c" stroke-width="0.7" />
<rect x="414.70" y="420.30" width="6.00" height="6.00" fill="#303134" stroke="#5c5d60" stroke-width="0.6" />
<circle cx="417.70" cy="423.30" r="1.35" fill="#3f5a2e"/>
<rect x="421.30" y="420.30" width="6.00" height="6.00" fill="#303134" stroke="#5c5d60" stroke-width="0.6" />
<circle cx="424.30" cy="423.30" r="1.35" fill="#2c467c"/>
<rect x="427.90" y="420.30" width="6.00" height="6.00" fill="#303134" stroke="#5c5d60" stroke-width="0.6" />
<path d="M430.90 422.00 V424.60 M429.60 423.30 H432.20" fill="none" stroke="#6e6f73" stroke-width="0.6" />
<text x="382.40" y="425.20" fill="#dcdcdc" text-anchor="start" class="m" style="font-size:6.05px;" >math2</text>
<line x1="401.60" y1="392.00" x2="401.60" y2="416.50" stroke="#858585" stroke-width="0.5" />
<line x1="407.90" y1="392.00" x2="407.90" y2="416.50" stroke="#858585" stroke-width="0.5" />
<line x1="428.40" y1="392.00" x2="428.40" y2="416.50" stroke="#858585" stroke-width="0.5" />
<rect x="410.80" y="391.80" width="5.40" height="24.40" fill="#a8dede" />
<text x="408.90" y="409.30" fill="#141414" text-anchor="end" class="m" style="font-size:4.1px;font-weight:bold;" >28.5</text>
<text x="412.60" y="409.30" fill="#141414" text-anchor="start" class="m" style="font-size:4.1px;font-weight:bold;" >Speed</text>
<rect x="303.00" y="140.90" width="53.40" height="23.00" fill="#686868" />
<rect x="303.00" y="140.90" width="8.80" height="23.00" fill="#8d7cc4" />
<rect x="304.00" y="141.70" width="2.20" height="21.40" fill="#7a69b2" />
<line x1="306.80" y1="140.90" x2="306.80" y2="163.90" stroke="#7a69b2" stroke-width="0.5" />
<rect x="307.30" y="141.40" width="4.20" height="4.95" fill="none" stroke="#a797d8" stroke-width="0.4" />
<circle cx="309.30" cy="143.78" r="1.15" fill="#c3b8e6"/>
<rect x="307.30" y="147.15" width="4.20" height="4.95" fill="none" stroke="#a797d8" stroke-width="0.4" />
<path d="M308.10 150.72 L310.60 148.22" fill="none" stroke="#c3b8e6" stroke-width="1" />
<rect x="307.30" y="152.90" width="4.20" height="4.95" fill="none" stroke="#a797d8" stroke-width="0.4" />
<circle cx="309.30" cy="155.28" r="1.15" fill="#c3b8e6"/>
<rect x="307.30" y="158.65" width="4.20" height="4.95" fill="none" stroke="#a797d8" stroke-width="0.4" />
<path d="M308.10 162.22 L310.60 159.72" fill="none" stroke="#c3b8e6" stroke-width="1" />
<rect x="302.70" y="151.50" width="3.70" height="1.60" fill="#17181b" />
<rect x="313.60" y="142.80" width="37.40" height="19.40" fill="#585858" />
<rect x="314.60" y="143.80" width="35.40" height="17.40" fill="#050505" />
<rect x="352.10" y="141.70" width="4.30" height="22.20" fill="#9c9c9c" />
<rect x="353.10" y="148.50" width="2.60" height="2.00" fill="#5d4c9c" />
<rect x="353.10" y="153.50" width="2.60" height="2.20" fill="#5d4c9c" />
<rect x="303.30" y="164.80" width="52.80" height="6.40" fill="#2a2b2e" stroke="#68696c" stroke-width="0.7" />
<rect x="343.30" y="165.20" width="6.00" height="5.60" fill="#303134" stroke="#5c5d60" stroke-width="0.6" />
<circle cx="346.30" cy="168.00" r="1.35" fill="#2f4a86"/>
<rect x="349.90" y="165.20" width="6.00" height="5.60" fill="#303134" stroke="#5c5d60" stroke-width="0.6" />
<path d="M352.90 166.70 V169.30 M351.60 168.00 H354.20" fill="none" stroke="#6e6f73" stroke-width="0.6" />
<text x="304.60" y="169.70" fill="#dcdcdc" text-anchor="start" class="m" style="font-size:6.05px;" >ramp1</text>
<rect x="349.60" y="171.60" width="7.00" height="6.90" fill="#9e5e90" stroke="#a86c9a" stroke-width="0.5" />
<circle cx="352.90" cy="175.10" r="1.2" fill="#e2cede"/>
<clipPath id="c1"><rect x="317.00" y="143.80" width="29.90" height="17.40"/></clipPath>
<g clip-path="url(#c1)">
<rect x="317.00" y="143.80" width="29.90" height="17.40" fill="#00ffff" />
<circle cx="331.95" cy="152.50" r="14.3" fill="#ff00c8"/>
<circle cx="331.95" cy="152.50" r="11.6" fill="#00ffff"/>
<circle cx="331.95" cy="152.50" r="7.4" fill="#ffb000"/>
<circle cx="331.95" cy="152.50" r="3.1" fill="#ff0000"/>
</g>
<rect x="303.00" y="223.40" width="53.40" height="23.00" fill="#686868" />
<rect x="303.00" y="223.40" width="8.80" height="23.00" fill="#8d7cc4" />
<rect x="304.00" y="224.20" width="2.20" height="21.40" fill="#7a69b2" />
<line x1="306.80" y1="223.40" x2="306.80" y2="246.40" stroke="#7a69b2" stroke-width="0.5" />
<rect x="307.30" y="223.90" width="4.20" height="4.95" fill="none" stroke="#a797d8" stroke-width="0.4" />
<circle cx="309.30" cy="226.28" r="1.15" fill="#c3b8e6"/>
<rect x="307.30" y="229.65" width="4.20" height="4.95" fill="none" stroke="#a797d8" stroke-width="0.4" />
<path d="M308.10 233.22 L310.60 230.72" fill="none" stroke="#c3b8e6" stroke-width="1" />
<rect x="307.30" y="235.40" width="4.20" height="4.95" fill="none" stroke="#a797d8" stroke-width="0.4" />
<circle cx="309.30" cy="237.78" r="1.15" fill="#c3b8e6"/>
<rect x="307.30" y="241.15" width="4.20" height="4.95" fill="none" stroke="#a797d8" stroke-width="0.4" />
<path d="M308.10 244.72 L310.60 242.22" fill="none" stroke="#c3b8e6" stroke-width="1" />
<rect x="302.70" y="234.00" width="3.70" height="1.60" fill="#17181b" />
<rect x="313.60" y="225.30" width="37.40" height="19.40" fill="#585858" />
<rect x="314.60" y="226.30" width="35.40" height="17.40" fill="#050505" />
<rect x="352.10" y="224.20" width="4.30" height="22.20" fill="#9c9c9c" />
<rect x="353.10" y="231.00" width="2.60" height="2.00" fill="#5d4c9c" />
<rect x="353.10" y="236.00" width="2.60" height="2.20" fill="#5d4c9c" />
<rect x="303.30" y="247.30" width="52.80" height="6.40" fill="#2a2b2e" stroke="#68696c" stroke-width="0.7" />
<rect x="343.30" y="247.70" width="6.00" height="5.60" fill="#303134" stroke="#5c5d60" stroke-width="0.6" />
<circle cx="346.30" cy="250.50" r="1.35" fill="#2f4a86"/>
<rect x="349.90" y="247.70" width="6.00" height="5.60" fill="#303134" stroke="#5c5d60" stroke-width="0.6" />
<path d="M352.90 249.20 V251.80 M351.60 250.50 H354.20" fill="none" stroke="#6e6f73" stroke-width="0.6" />
<text x="304.60" y="252.20" fill="#dcdcdc" text-anchor="start" class="m" style="font-size:6.05px;" >ramp2</text>
<rect x="349.60" y="254.10" width="7.00" height="6.90" fill="#9e5e90" stroke="#a86c9a" stroke-width="0.5" />
<circle cx="352.90" cy="257.60" r="1.2" fill="#e2cede"/>
<clipPath id="c2"><rect x="317.00" y="226.30" width="29.90" height="17.40"/></clipPath>
<g clip-path="url(#c2)">
<path d="M331.95 235.00 L371.70 230.53 L371.65 239.88 Z" fill="#ff0000"/>
<path d="M331.95 235.00 L371.70 239.49 L369.57 248.60 Z" fill="#00ffff"/>
<path d="M331.95 235.00 L369.70 248.22 L365.60 256.63 Z" fill="#ffd800"/>
<path d="M331.95 235.00 L365.81 256.29 L359.94 263.57 Z" fill="#00ffff"/>
<path d="M331.95 235.00 L360.23 263.29 L352.88 269.08 Z" fill="#ff0000"/>
<path d="M331.95 235.00 L353.22 268.87 L344.78 272.89 Z" fill="#00ffff"/>
<path d="M331.95 235.00 L345.15 272.76 L336.02 274.79 Z" fill="#ffd800"/>
<path d="M331.95 235.00 L336.42 274.75 L327.07 274.70 Z" fill="#00ffff"/>
<path d="M331.95 235.00 L327.46 274.75 L318.35 272.62 Z" fill="#ff0000"/>
<path d="M331.95 235.00 L318.73 272.75 L310.32 268.65 Z" fill="#00ffff"/>
<path d="M331.95 235.00 L310.66 268.86 L303.38 262.99 Z" fill="#ffd800"/>
<path d="M331.95 235.00 L303.66 263.28 L297.87 255.93 Z" fill="#00ffff"/>
<path d="M331.95 235.00 L298.08 256.27 L294.06 247.83 Z" fill="#ff0000"/>
<path d="M331.95 235.00 L294.19 248.20 L292.16 239.07 Z" fill="#00ffff"/>
<path d="M331.95 235.00 L292.20 239.47 L292.25 230.12 Z" fill="#ffd800"/>
<path d="M331.95 235.00 L292.20 230.51 L294.33 221.40 Z" fill="#00ffff"/>
<path d="M331.95 235.00 L294.20 221.78 L298.30 213.37 Z" fill="#ff0000"/>
<path d="M331.95 235.00 L298.09 213.71 L303.96 206.43 Z" fill="#00ffff"/>
<path d="M331.95 235.00 L303.67 206.71 L311.02 200.92 Z" fill="#ffd800"/>
<path d="M331.95 235.00 L310.68 201.13 L319.12 197.11 Z" fill="#00ffff"/>
<path d="M331.95 235.00 L318.75 197.24 L327.88 195.21 Z" fill="#ff0000"/>
<path d="M331.95 235.00 L327.48 195.25 L336.83 195.30 Z" fill="#00ffff"/>
<path d="M331.95 235.00 L336.44 195.25 L345.55 197.38 Z" fill="#ffd800"/>
<path d="M331.95 235.00 L345.17 197.25 L353.58 201.35 Z" fill="#00ffff"/>
<path d="M331.95 235.00 L353.24 201.14 L360.52 207.01 Z" fill="#ff0000"/>
<path d="M331.95 235.00 L360.24 206.72 L366.03 214.07 Z" fill="#00ffff"/>
<path d="M331.95 235.00 L365.82 213.73 L369.84 222.17 Z" fill="#ffd800"/>
<path d="M331.95 235.00 L369.71 221.80 L371.74 230.93 Z" fill="#00ffff"/>
</g>
<rect x="450.30" y="178.00" width="53.40" height="23.00" fill="#686868" />
<rect x="450.30" y="178.00" width="8.80" height="23.00" fill="#8d7cc4" />
<rect x="451.30" y="178.80" width="2.20" height="21.40" fill="#7a69b2" />
<line x1="454.10" y1="178.00" x2="454.10" y2="201.00" stroke="#7a69b2" stroke-width="0.5" />
<rect x="454.60" y="178.50" width="4.20" height="4.95" fill="none" stroke="#a797d8" stroke-width="0.4" />
<circle cx="456.60" cy="180.88" r="1.15" fill="#c3b8e6"/>
<rect x="454.60" y="184.25" width="4.20" height="4.95" fill="none" stroke="#a797d8" stroke-width="0.4" />
<path d="M455.40 187.82 L457.90 185.32" fill="none" stroke="#c3b8e6" stroke-width="1" />
<rect x="454.60" y="190.00" width="4.20" height="4.95" fill="none" stroke="#a797d8" stroke-width="0.4" />
<circle cx="456.60" cy="192.38" r="1.15" fill="#c3b8e6"/>
<rect x="454.60" y="195.75" width="4.20" height="4.95" fill="none" stroke="#a797d8" stroke-width="0.4" />
<path d="M455.40 199.32 L457.90 196.82" fill="none" stroke="#c3b8e6" stroke-width="1" />
<rect x="450.30" y="187.70" width="3.00" height="3.40" fill="#b3a2ea" />
<rect x="460.90" y="179.90" width="37.40" height="19.40" fill="#585858" />
<rect x="462.10" y="180.90" width="34.60" height="17.40" fill="#050505" />
<rect x="499.40" y="178.80" width="4.30" height="22.20" fill="#9c9c9c" />
<rect x="500.40" y="185.60" width="2.60" height="2.00" fill="#5d4c9c" />
<rect x="500.40" y="190.60" width="2.60" height="2.20" fill="#5d4c9c" />
<rect x="450.60" y="201.90" width="52.80" height="6.40" fill="#2a2b2e" stroke="#68696c" stroke-width="0.7" />
<rect x="490.60" y="202.30" width="6.00" height="5.60" fill="#303134" stroke="#5c5d60" stroke-width="0.6" />
<circle cx="493.60" cy="205.10" r="1.35" fill="#2f4a86"/>
<rect x="497.20" y="202.30" width="6.00" height="5.60" fill="#303134" stroke="#5c5d60" stroke-width="0.6" />
<path d="M500.20 203.80 V206.40 M498.90 205.10 H501.50" fill="none" stroke="#6e6f73" stroke-width="0.6" />
<text x="451.90" y="206.80" fill="#dcdcdc" text-anchor="start" class="m" style="font-size:6.05px;" >comp1</text>
<clipPath id="c3"><rect x="464.00" y="180.90" width="31.30" height="17.40"/></clipPath>
<g clip-path="url(#c3)">
<path d="M479.65 189.60 L519.40 185.13 A40 40 0 0 1 519.34 194.56 Z" fill="#00f0ff"/>
<path d="M479.65 189.60 L519.40 194.09 A40 40 0 0 1 517.24 203.27 Z" fill="#00ff30"/>
<path d="M479.65 189.60 L517.40 202.82 A40 40 0 0 1 513.26 211.29 Z" fill="#ff1010"/>
<path d="M479.65 189.60 L513.51 210.89 A40 40 0 0 1 507.59 218.23 Z" fill="#00ff30"/>
<path d="M479.65 189.60 L507.93 217.89 A40 40 0 0 1 500.52 223.73 Z" fill="#00f0ff"/>
<path d="M479.65 189.60 L500.92 223.47 A40 40 0 0 1 492.40 227.51 Z" fill="#ff5a00"/>
<path d="M479.65 189.60 L492.85 227.36 A40 40 0 0 1 483.64 229.40 Z" fill="#00ff30"/>
<path d="M479.65 189.60 L484.12 229.35 A40 40 0 0 1 474.69 229.29 Z" fill="#00f0ff"/>
<path d="M479.65 189.60 L475.16 229.35 A40 40 0 0 1 465.98 227.19 Z" fill="#00ff30"/>
<path d="M479.65 189.60 L466.43 227.35 A40 40 0 0 1 457.96 223.21 Z" fill="#ff1010"/>
<path d="M479.65 189.60 L458.36 223.46 A40 40 0 0 1 451.02 217.54 Z" fill="#00ff30"/>
<path d="M479.65 189.60 L451.36 217.88 A40 40 0 0 1 445.52 210.47 Z" fill="#00f0ff"/>
<path d="M479.65 189.60 L445.78 210.87 A40 40 0 0 1 441.74 202.35 Z" fill="#ff5a00"/>
<path d="M479.65 189.60 L441.89 202.80 A40 40 0 0 1 439.85 193.59 Z" fill="#00ff30"/>
<path d="M479.65 189.60 L439.90 194.07 A40 40 0 0 1 439.96 184.64 Z" fill="#00f0ff"/>
<path d="M479.65 189.60 L439.90 185.11 A40 40 0 0 1 442.06 175.93 Z" fill="#00ff30"/>
<path d="M479.65 189.60 L441.90 176.38 A40 40 0 0 1 446.04 167.91 Z" fill="#ff1010"/>
<path d="M479.65 189.60 L445.79 168.31 A40 40 0 0 1 451.71 160.97 Z" fill="#00ff30"/>
<path d="M479.65 189.60 L451.37 161.31 A40 40 0 0 1 458.78 155.47 Z" fill="#00f0ff"/>
<path d="M479.65 189.60 L458.38 155.73 A40 40 0 0 1 466.90 151.69 Z" fill="#ff5a00"/>
<path d="M479.65 189.60 L466.45 151.84 A40 40 0 0 1 475.66 149.80 Z" fill="#00ff30"/>
<path d="M479.65 189.60 L475.18 149.85 A40 40 0 0 1 484.61 149.91 Z" fill="#00f0ff"/>
<path d="M479.65 189.60 L484.14 149.85 A40 40 0 0 1 493.32 152.01 Z" fill="#00ff30"/>
<path d="M479.65 189.60 L492.87 151.85 A40 40 0 0 1 501.34 155.99 Z" fill="#ff1010"/>
<path d="M479.65 189.60 L500.94 155.74 A40 40 0 0 1 508.28 161.66 Z" fill="#00ff30"/>
<path d="M479.65 189.60 L507.94 161.32 A40 40 0 0 1 513.78 168.73 Z" fill="#00f0ff"/>
<path d="M479.65 189.60 L513.52 168.33 A40 40 0 0 1 517.56 176.85 Z" fill="#ff5a00"/>
<path d="M479.65 189.60 L517.41 176.40 A40 40 0 0 1 519.45 185.61 Z" fill="#00ff30"/>
<path d="M479.65 189.60 L493.96 187.99 A14.4 14.4 0 0 1 493.94 191.39 Z" fill="#00ff30"/>
<path d="M479.65 189.60 L493.96 191.22 A14.4 14.4 0 0 1 493.18 194.52 Z" fill="#ff1010"/>
<path d="M479.65 189.60 L493.24 194.36 A14.4 14.4 0 0 1 491.75 197.41 Z" fill="#6a10ff"/>
<path d="M479.65 189.60 L491.84 197.26 A14.4 14.4 0 0 1 489.71 199.91 Z" fill="#00ff30"/>
<path d="M479.65 189.60 L489.83 199.78 A14.4 14.4 0 0 1 487.16 201.89 Z" fill="#ff00d0"/>
<path d="M479.65 189.60 L487.31 201.79 A14.4 14.4 0 0 1 484.24 203.25 Z" fill="#ff1010"/>
<path d="M479.65 189.60 L484.40 203.19 A14.4 14.4 0 0 1 481.09 203.93 Z" fill="#00f0ff"/>
<path d="M479.65 189.60 L481.26 203.91 A14.4 14.4 0 0 1 477.86 203.89 Z" fill="#00ff30"/>
<path d="M479.65 189.60 L478.03 203.91 A14.4 14.4 0 0 1 474.73 203.13 Z" fill="#ff1010"/>
<path d="M479.65 189.60 L474.89 203.19 A14.4 14.4 0 0 1 471.84 201.70 Z" fill="#6a10ff"/>
<path d="M479.65 189.60 L471.99 201.79 A14.4 14.4 0 0 1 469.34 199.66 Z" fill="#00ff30"/>
<path d="M479.65 189.60 L469.47 199.78 A14.4 14.4 0 0 1 467.36 197.11 Z" fill="#ff00d0"/>
<path d="M479.65 189.60 L467.46 197.26 A14.4 14.4 0 0 1 466.00 194.19 Z" fill="#ff1010"/>
<path d="M479.65 189.60 L466.06 194.35 A14.4 14.4 0 0 1 465.32 191.04 Z" fill="#00f0ff"/>
<path d="M479.65 189.60 L465.34 191.21 A14.4 14.4 0 0 1 465.36 187.81 Z" fill="#00ff30"/>
<path d="M479.65 189.60 L465.34 187.98 A14.4 14.4 0 0 1 466.12 184.68 Z" fill="#ff1010"/>
<path d="M479.65 189.60 L466.06 184.84 A14.4 14.4 0 0 1 467.55 181.79 Z" fill="#6a10ff"/>
<path d="M479.65 189.60 L467.46 181.94 A14.4 14.4 0 0 1 469.59 179.29 Z" fill="#00ff30"/>
<path d="M479.65 189.60 L469.47 179.42 A14.4 14.4 0 0 1 472.14 177.31 Z" fill="#ff00d0"/>
<path d="M479.65 189.60 L471.99 177.41 A14.4 14.4 0 0 1 475.06 175.95 Z" fill="#ff1010"/>
<path d="M479.65 189.60 L474.90 176.01 A14.4 14.4 0 0 1 478.21 175.27 Z" fill="#00f0ff"/>
<path d="M479.65 189.60 L478.04 175.29 A14.4 14.4 0 0 1 481.44 175.31 Z" fill="#00ff30"/>
<path d="M479.65 189.60 L481.27 175.29 A14.4 14.4 0 0 1 484.57 176.07 Z" fill="#ff1010"/>
<path d="M479.65 189.60 L484.41 176.01 A14.4 14.4 0 0 1 487.46 177.50 Z" fill="#6a10ff"/>
<path d="M479.65 189.60 L487.31 177.41 A14.4 14.4 0 0 1 489.96 179.54 Z" fill="#00ff30"/>
<path d="M479.65 189.60 L489.83 179.42 A14.4 14.4 0 0 1 491.94 182.09 Z" fill="#ff00d0"/>
<path d="M479.65 189.60 L491.84 181.94 A14.4 14.4 0 0 1 493.30 185.01 Z" fill="#ff1010"/>
<path d="M479.65 189.60 L493.24 184.85 A14.4 14.4 0 0 1 493.98 188.16 Z" fill="#00f0ff"/>
<path d="M479.65 189.60 L490.78 188.35 A11.2 11.2 0 0 1 490.76 190.99 Z" fill="#ff1010"/>
<path d="M479.65 189.60 L490.78 190.86 A11.2 11.2 0 0 1 490.18 193.43 Z" fill="#00ff30"/>
<path d="M479.65 189.60 L490.22 193.30 A11.2 11.2 0 0 1 489.06 195.67 Z" fill="#00f0ff"/>
<path d="M479.65 189.60 L489.13 195.56 A11.2 11.2 0 0 1 487.47 197.62 Z" fill="#ff1010"/>
<path d="M479.65 189.60 L487.57 197.52 A11.2 11.2 0 0 1 485.49 199.16 Z" fill="#2040ff"/>
<path d="M479.65 189.60 L485.61 199.08 A11.2 11.2 0 0 1 483.22 200.22 Z" fill="#00ff30"/>
<path d="M479.65 189.60 L483.35 200.17 A11.2 11.2 0 0 1 480.77 200.74 Z" fill="#ff1010"/>
<path d="M479.65 189.60 L480.90 200.73 A11.2 11.2 0 0 1 478.26 200.71 Z" fill="#ff1010"/>
<path d="M479.65 189.60 L478.39 200.73 A11.2 11.2 0 0 1 475.82 200.13 Z" fill="#00ff30"/>
<path d="M479.65 189.60 L475.95 200.17 A11.2 11.2 0 0 1 473.58 199.01 Z" fill="#00f0ff"/>
<path d="M479.65 189.60 L473.69 199.08 A11.2 11.2 0 0 1 471.63 197.42 Z" fill="#ff1010"/>
<path d="M479.65 189.60 L471.73 197.52 A11.2 11.2 0 0 1 470.09 195.44 Z" fill="#2040ff"/>
<path d="M479.65 189.60 L470.17 195.56 A11.2 11.2 0 0 1 469.03 193.17 Z" fill="#00ff30"/>
<path d="M479.65 189.60 L469.08 193.30 A11.2 11.2 0 0 1 468.51 190.72 Z" fill="#ff1010"/>
<path d="M479.65 189.60 L468.52 190.85 A11.2 11.2 0 0 1 468.54 188.21 Z" fill="#ff1010"/>
<path d="M479.65 189.60 L468.52 188.34 A11.2 11.2 0 0 1 469.12 185.77 Z" fill="#00ff30"/>
<path d="M479.65 189.60 L469.08 185.90 A11.2 11.2 0 0 1 470.24 183.53 Z" fill="#00f0ff"/>
<path d="M479.65 189.60 L470.17 183.64 A11.2 11.2 0 0 1 471.83 181.58 Z" fill="#ff1010"/>
<path d="M479.65 189.60 L471.73 181.68 A11.2 11.2 0 0 1 473.81 180.04 Z" fill="#2040ff"/>
<path d="M479.65 189.60 L473.69 180.12 A11.2 11.2 0 0 1 476.08 178.98 Z" fill="#00ff30"/>
<path d="M479.65 189.60 L475.95 179.03 A11.2 11.2 0 0 1 478.53 178.46 Z" fill="#ff1010"/>
<path d="M479.65 189.60 L478.40 178.47 A11.2 11.2 0 0 1 481.04 178.49 Z" fill="#ff1010"/>
<path d="M479.65 189.60 L480.91 178.47 A11.2 11.2 0 0 1 483.48 179.07 Z" fill="#00ff30"/>
<path d="M479.65 189.60 L483.35 179.03 A11.2 11.2 0 0 1 485.72 180.19 Z" fill="#00f0ff"/>
<path d="M479.65 189.60 L485.61 180.12 A11.2 11.2 0 0 1 487.67 181.78 Z" fill="#ff1010"/>
<path d="M479.65 189.60 L487.57 181.68 A11.2 11.2 0 0 1 489.21 183.76 Z" fill="#2040ff"/>
<path d="M479.65 189.60 L489.13 183.64 A11.2 11.2 0 0 1 490.27 186.03 Z" fill="#00ff30"/>
<path d="M479.65 189.60 L490.22 185.90 A11.2 11.2 0 0 1 490.79 188.48 Z" fill="#ff1010"/>
<path d="M479.65 189.60 L486.90 188.78 A7.3 7.3 0 0 1 486.89 190.51 Z" fill="#2040ff"/>
<path d="M479.65 189.60 L486.90 190.42 A7.3 7.3 0 0 1 486.51 192.09 Z" fill="#ffa000"/>
<path d="M479.65 189.60 L486.54 192.01 A7.3 7.3 0 0 1 485.78 193.56 Z" fill="#ff1010"/>
<path d="M479.65 189.60 L485.83 193.49 A7.3 7.3 0 0 1 484.75 194.82 Z" fill="#2040ff"/>
<path d="M479.65 189.60 L484.81 194.76 A7.3 7.3 0 0 1 483.46 195.83 Z" fill="#00f0ff"/>
<path d="M479.65 189.60 L483.53 195.78 A7.3 7.3 0 0 1 481.98 196.52 Z" fill="#ff1010"/>
<path d="M479.65 189.60 L482.06 196.49 A7.3 7.3 0 0 1 480.38 196.86 Z" fill="#ffa000"/>
<path d="M479.65 189.60 L480.47 196.85 A7.3 7.3 0 0 1 478.74 196.84 Z" fill="#2040ff"/>
<path d="M479.65 189.60 L478.83 196.85 A7.3 7.3 0 0 1 477.16 196.46 Z" fill="#ffa000"/>
<path d="M479.65 189.60 L477.24 196.49 A7.3 7.3 0 0 1 475.69 195.73 Z" fill="#ff1010"/>
<path d="M479.65 189.60 L475.76 195.78 A7.3 7.3 0 0 1 474.43 194.70 Z" fill="#2040ff"/>
<path d="M479.65 189.60 L474.49 194.76 A7.3 7.3 0 0 1 473.42 193.41 Z" fill="#00f0ff"/>
<path d="M479.65 189.60 L473.47 193.48 A7.3 7.3 0 0 1 472.73 191.93 Z" fill="#ff1010"/>
<path d="M479.65 189.60 L472.76 192.01 A7.3 7.3 0 0 1 472.39 190.33 Z" fill="#ffa000"/>
<path d="M479.65 189.60 L472.40 190.42 A7.3 7.3 0 0 1 472.41 188.69 Z" fill="#2040ff"/>
<path d="M479.65 189.60 L472.40 188.78 A7.3 7.3 0 0 1 472.79 187.11 Z" fill="#ffa000"/>
<path d="M479.65 189.60 L472.76 187.19 A7.3 7.3 0 0 1 473.52 185.64 Z" fill="#ff1010"/>
<path d="M479.65 189.60 L473.47 185.71 A7.3 7.3 0 0 1 474.55 184.38 Z" fill="#2040ff"/>
<path d="M479.65 189.60 L474.49 184.44 A7.3 7.3 0 0 1 475.84 183.37 Z" fill="#00f0ff"/>
<path d="M479.65 189.60 L475.77 183.42 A7.3 7.3 0 0 1 477.32 182.68 Z" fill="#ff1010"/>
<path d="M479.65 189.60 L477.24 182.71 A7.3 7.3 0 0 1 478.92 182.34 Z" fill="#ffa000"/>
<path d="M479.65 189.60 L478.83 182.35 A7.3 7.3 0 0 1 480.56 182.36 Z" fill="#2040ff"/>
<path d="M479.65 189.60 L480.47 182.35 A7.3 7.3 0 0 1 482.14 182.74 Z" fill="#ffa000"/>
<path d="M479.65 189.60 L482.06 182.71 A7.3 7.3 0 0 1 483.61 183.47 Z" fill="#ff1010"/>
<path d="M479.65 189.60 L483.54 183.42 A7.3 7.3 0 0 1 484.87 184.50 Z" fill="#2040ff"/>
<path d="M479.65 189.60 L484.81 184.44 A7.3 7.3 0 0 1 485.88 185.79 Z" fill="#00f0ff"/>
<path d="M479.65 189.60 L485.83 185.72 A7.3 7.3 0 0 1 486.57 187.27 Z" fill="#ff1010"/>
<path d="M479.65 189.60 L486.54 187.19 A7.3 7.3 0 0 1 486.91 188.87 Z" fill="#ffa000"/>
<path d="M479.65 189.60 L482.73 189.25 A3.1 3.1 0 0 1 482.73 189.98 Z" fill="#ff00d0"/>
<path d="M479.65 189.60 L482.73 189.95 A3.1 3.1 0 0 1 482.56 190.66 Z" fill="#2040ff"/>
<path d="M479.65 189.60 L482.58 190.62 A3.1 3.1 0 0 1 482.25 191.28 Z" fill="#00f0ff"/>
<path d="M479.65 189.60 L482.27 191.25 A3.1 3.1 0 0 1 481.82 191.82 Z" fill="#ff1010"/>
<path d="M479.65 189.60 L481.84 191.79 A3.1 3.1 0 0 1 481.27 192.24 Z" fill="#ff00d0"/>
<path d="M479.65 189.60 L481.30 192.23 A3.1 3.1 0 0 1 480.64 192.54 Z" fill="#2040ff"/>
<path d="M479.65 189.60 L480.67 192.53 A3.1 3.1 0 0 1 479.96 192.68 Z" fill="#00f0ff"/>
<path d="M479.65 189.60 L480.00 192.68 A3.1 3.1 0 0 1 479.27 192.68 Z" fill="#ff1010"/>
<path d="M479.65 189.60 L479.30 192.68 A3.1 3.1 0 0 1 478.59 192.51 Z" fill="#ff00d0"/>
<path d="M479.65 189.60 L478.63 192.53 A3.1 3.1 0 0 1 477.97 192.20 Z" fill="#2040ff"/>
<path d="M479.65 189.60 L478.00 192.22 A3.1 3.1 0 0 1 477.43 191.77 Z" fill="#00f0ff"/>
<path d="M479.65 189.60 L477.46 191.79 A3.1 3.1 0 0 1 477.01 191.22 Z" fill="#ff1010"/>
<path d="M479.65 189.60 L477.02 191.25 A3.1 3.1 0 0 1 476.71 190.59 Z" fill="#ff00d0"/>
<path d="M479.65 189.60 L476.72 190.62 A3.1 3.1 0 0 1 476.57 189.91 Z" fill="#2040ff"/>
<path d="M479.65 189.60 L476.57 189.95 A3.1 3.1 0 0 1 476.57 189.22 Z" fill="#00f0ff"/>
<path d="M479.65 189.60 L476.57 189.25 A3.1 3.1 0 0 1 476.74 188.54 Z" fill="#ff1010"/>
<path d="M479.65 189.60 L476.72 188.58 A3.1 3.1 0 0 1 477.05 187.92 Z" fill="#ff00d0"/>
<path d="M479.65 189.60 L477.03 187.95 A3.1 3.1 0 0 1 477.48 187.38 Z" fill="#2040ff"/>
<path d="M479.65 189.60 L477.46 187.41 A3.1 3.1 0 0 1 478.03 186.96 Z" fill="#00f0ff"/>
<path d="M479.65 189.60 L478.00 186.97 A3.1 3.1 0 0 1 478.66 186.66 Z" fill="#ff1010"/>
<path d="M479.65 189.60 L478.63 186.67 A3.1 3.1 0 0 1 479.34 186.52 Z" fill="#ff00d0"/>
<path d="M479.65 189.60 L479.30 186.52 A3.1 3.1 0 0 1 480.03 186.52 Z" fill="#2040ff"/>
<path d="M479.65 189.60 L480.00 186.52 A3.1 3.1 0 0 1 480.71 186.69 Z" fill="#00f0ff"/>
<path d="M479.65 189.60 L480.67 186.67 A3.1 3.1 0 0 1 481.33 187.00 Z" fill="#ff1010"/>
<path d="M479.65 189.60 L481.30 186.98 A3.1 3.1 0 0 1 481.87 187.43 Z" fill="#ff00d0"/>
<path d="M479.65 189.60 L481.84 187.41 A3.1 3.1 0 0 1 482.29 187.98 Z" fill="#2040ff"/>
<path d="M479.65 189.60 L482.28 187.95 A3.1 3.1 0 0 1 482.59 188.61 Z" fill="#00f0ff"/>
<path d="M479.65 189.60 L482.58 188.58 A3.1 3.1 0 0 1 482.73 189.29 Z" fill="#ff1010"/>
</g>
<clipPath id="cm"><rect x="540" y="170" width="16.4" height="50"/></clipPath><g clip-path="url(#cm)">
<rect x="545.00" y="178.00" width="53.40" height="23.00" fill="#686868" />
<rect x="545.00" y="178.00" width="8.80" height="23.00" fill="#8d7cc4" />
<rect x="546.00" y="178.80" width="2.20" height="21.40" fill="#7a69b2" />
<line x1="548.80" y1="178.00" x2="548.80" y2="201.00" stroke="#7a69b2" stroke-width="0.5" />
<rect x="549.30" y="178.50" width="4.20" height="4.95" fill="none" stroke="#a797d8" stroke-width="0.4" />
<circle cx="551.30" cy="180.88" r="1.15" fill="#c3b8e6"/>
<rect x="549.30" y="184.25" width="4.20" height="4.95" fill="none" stroke="#a797d8" stroke-width="0.4" />
<path d="M550.10 187.82 L552.60 185.32" fill="none" stroke="#c3b8e6" stroke-width="1" />
<rect x="549.30" y="190.00" width="4.20" height="4.95" fill="none" stroke="#a797d8" stroke-width="0.4" />
<circle cx="551.30" cy="192.38" r="1.15" fill="#c3b8e6"/>
<rect x="549.30" y="195.75" width="4.20" height="4.95" fill="none" stroke="#a797d8" stroke-width="0.4" />
<path d="M550.10 199.32 L552.60 196.82" fill="none" stroke="#c3b8e6" stroke-width="1" />
<rect x="545.00" y="187.70" width="3.00" height="3.40" fill="#b3a2ea" />
<rect x="555.60" y="179.90" width="37.40" height="19.40" fill="#585858" />
<rect x="556.60" y="180.90" width="35.40" height="17.40" fill="#050505" />
<rect x="594.10" y="178.80" width="4.30" height="22.20" fill="#9c9c9c" />
<rect x="595.10" y="185.60" width="2.60" height="2.00" fill="#5d4c9c" />
<rect x="595.10" y="190.60" width="2.60" height="2.20" fill="#5d4c9c" />
<rect x="545.30" y="201.90" width="52.80" height="6.40" fill="#2a2b2e" stroke="#68696c" stroke-width="0.7" />
<rect x="585.30" y="202.30" width="6.00" height="5.60" fill="#303134" stroke="#5c5d60" stroke-width="0.6" />
<circle cx="588.30" cy="205.10" r="1.35" fill="#2f4a86"/>
<rect x="591.90" y="202.30" width="6.00" height="5.60" fill="#303134" stroke="#5c5d60" stroke-width="0.6" />
<path d="M594.90 203.80 V206.40 M593.60 205.10 H596.20" fill="none" stroke="#6e6f73" stroke-width="0.6" />
<text x="546.60" y="206.80" fill="#dcdcdc" text-anchor="start" class="m" style="font-size:6.05px;" >mor</text>
</g>
<rect x="586.10" y="176.20" width="150.80" height="6.00" fill="#323232" stroke="#444" stroke-width="0.5" />
<rect x="586.10" y="182.20" width="150.80" height="102.00" fill="#2e2e2e" />
<rect x="586.10" y="182.20" width="5.30" height="102.00" fill="#8e8e8e" />
<rect x="730.90" y="182.20" width="6.00" height="102.00" fill="#8e8e8e" />
<line x1="592.00" y1="195.90" x2="603.20" y2="195.90" stroke="#484848" stroke-width="0.6" />
<circle cx="597.60" cy="189.45" r="2.9" fill="none" stroke="#d2d2d2" stroke-width="1.2"/>
<line x1="592.00" y1="208.80" x2="603.20" y2="208.80" stroke="#484848" stroke-width="0.6" />
<path d="M594.60 205.35 L597.00 201.75 L598.20 202.95 L600.60 199.35" fill="none" stroke="#d2d2d2" stroke-width="1.2" />
<path d="M594.40 205.55 L597.40 203.55 L596.20 202.35 Z" fill="#d2d2d2" />
<line x1="592.00" y1="221.70" x2="603.20" y2="221.70" stroke="#484848" stroke-width="0.6" />
<path d="M595.00 212.85 L600.20 217.65 M600.20 212.85 L595.00 217.65" fill="none" stroke="#d2d2d2" stroke-width="1.5" />
<line x1="592.00" y1="234.60" x2="603.20" y2="234.60" stroke="#484848" stroke-width="0.6" />
<circle cx="597.00" cy="229.15" r="2" fill="#d2d2d2"/>
<path d="M597.80 227.55 Q598.00 225.15 600.20 226.15" fill="none" stroke="#d2d2d2" stroke-width="1" />
<rect x="603.80" y="182.60" width="126.60" height="101.20" fill="#7a7a7a" />
<rect x="606.20" y="185.00" width="122.00" height="96.40" fill="#1b1b1b" />
<text x="667.60" y="241.60" fill="#c9c9c9" text-anchor="middle" style="font-size:21.5px;font-weight:bold;" >Win</text>
<rect x="586.10" y="284.20" width="150.80" height="4.60" fill="#2c2c2c" stroke="#444" stroke-width="0.5" />
<rect x="586.10" y="289.00" width="140.40" height="9.80" fill="#303134" stroke="#5e5f63" stroke-width="0.7" />
<text x="587.60" y="296.30" fill="#e2e2e2" text-anchor="start" class="m" style="font-size:6.2px;" >window1</text>
<rect x="727.60" y="289.00" width="9.30" height="9.80" fill="#303134" stroke="#5e5f63" stroke-width="0.7" />
<path d="M732.2 292.2 V295.8 M730.4 294 H734" fill="none" stroke="#77787c" stroke-width="0.7" />
<rect x="581.50" y="314.00" width="159.80" height="111.40" fill="#17461a" stroke="#04d004" stroke-width="1.4" />
<line x1="582.20" y1="382.95" x2="740.60" y2="382.95" stroke="#2c4a4a" stroke-width="2" />
<line x1="661.50" y1="314.70" x2="661.50" y2="424.70" stroke="#2c4a4a" stroke-width="1.6" />
<rect x="586.20" y="318.40" width="73.40" height="4.60" fill="#303030" stroke="#474747" stroke-width="0.5" />
<rect x="663.80" y="318.40" width="73.20" height="4.60" fill="#303030" stroke="#474747" stroke-width="0.5" />
<rect x="586.20" y="323.50" width="150.80" height="82.30" fill="#2e2e2e" />
<rect x="586.20" y="323.50" width="5.30" height="82.30" fill="#8e8e8e" />
<rect x="731.00" y="323.50" width="6.00" height="82.30" fill="#8e8e8e" />
<line x1="592.00" y1="337.10" x2="603.20" y2="337.10" stroke="#484848" stroke-width="0.6" />
<circle cx="597.60" cy="330.65" r="2.9" fill="none" stroke="#d2d2d2" stroke-width="1.2"/>
<circle cx="597.60" cy="330.65" r="1" fill="#d2d2d2"/>
<line x1="592.00" y1="350.00" x2="603.20" y2="350.00" stroke="#484848" stroke-width="0.6" />
<path d="M594.60 346.55 L597.00 342.95 L598.20 344.15 L600.60 340.55" fill="none" stroke="#d2d2d2" stroke-width="1.2" />
<path d="M594.40 346.75 L597.40 344.75 L596.20 343.55 Z" fill="#d2d2d2" />
<line x1="592.00" y1="362.90" x2="603.20" y2="362.90" stroke="#484848" stroke-width="0.6" />
<path d="M595.00 354.05 L600.20 358.85 M600.20 354.05 L595.00 358.85" fill="none" stroke="#d2d2d2" stroke-width="1.5" />
<line x1="592.00" y1="375.80" x2="603.20" y2="375.80" stroke="#484848" stroke-width="0.6" />
<circle cx="597.00" cy="370.35" r="2" fill="#d2d2d2"/>
<path d="M597.80 368.75 Q598.00 366.35 600.20 367.35" fill="none" stroke="#d2d2d2" stroke-width="1" />
<rect x="603.90" y="323.80" width="126.10" height="81.60" fill="#7a7a7a" />
<rect x="606.30" y="326.20" width="122.30" height="76.70" fill="#000" />
<rect x="731.60" y="351.40" width="4.60" height="11.80" fill="#5a5490" />
<rect x="731.60" y="365.60" width="4.60" height="12.60" fill="#5a5490" />
<line x1="634.60" y1="330.50" x2="634.60" y2="394.60" stroke="#3c3c3c" stroke-width="0.6" />
<line x1="656.60" y1="330.50" x2="656.60" y2="394.60" stroke="#3c3c3c" stroke-width="0.6" />
<line x1="678.00" y1="330.50" x2="678.00" y2="394.60" stroke="#3c3c3c" stroke-width="0.6" />
<line x1="699.60" y1="330.50" x2="699.60" y2="394.60" stroke="#3c3c3c" stroke-width="0.6" />
<line x1="721.60" y1="330.50" x2="721.60" y2="394.60" stroke="#3c3c3c" stroke-width="0.6" />
<line x1="607.00" y1="337.00" x2="727.60" y2="337.00" stroke="#3c3c3c" stroke-width="0.6" />
<line x1="607.00" y1="350.60" x2="727.60" y2="350.60" stroke="#3c3c3c" stroke-width="0.6" />
<line x1="607.00" y1="364.60" x2="727.60" y2="364.60" stroke="#3c3c3c" stroke-width="0.6" />
<line x1="607.00" y1="378.20" x2="727.60" y2="378.20" stroke="#3c3c3c" stroke-width="0.6" />
<line x1="607.00" y1="392.00" x2="727.60" y2="392.00" stroke="#3c3c3c" stroke-width="0.6" />
<rect x="606.30" y="395.20" width="122.30" height="7.70" fill="#0c0c0c" />
<text x="607.40" y="335.60" fill="#e0e0e0" text-anchor="start" style="font-size:5.4px;" >0.40</text>
<text x="607.40" y="349.40" fill="#e0e0e0" text-anchor="start" style="font-size:5.4px;" >0.20</text>
<text x="607.40" y="363.00" fill="#e0e0e0" text-anchor="start" style="font-size:5.4px;" >-0.00</text>
<text x="607.40" y="377.00" fill="#e0e0e0" text-anchor="start" style="font-size:5.4px;" >-0.20</text>
<text x="607.40" y="390.60" fill="#e0e0e0" text-anchor="start" style="font-size:5.4px;" >-0.40</text>
<text x="612.60" y="401.20" fill="#e0e0e0" text-anchor="middle" style="font-size:5.4px;" >95</text>
<text x="634.80" y="401.20" fill="#e0e0e0" text-anchor="middle" style="font-size:5.4px;" >95.2</text>
<text x="656.80" y="401.20" fill="#e0e0e0" text-anchor="middle" style="font-size:5.4px;" >95.4</text>
<text x="678.40" y="401.20" fill="#e0e0e0" text-anchor="middle" style="font-size:5.4px;" >95.6</text>
<text x="700.20" y="401.20" fill="#e0e0e0" text-anchor="middle" style="font-size:5.4px;" >95.8</text>
<text x="722.20" y="401.20" fill="#e0e0e0" text-anchor="middle" style="font-size:5.4px;" >96</text>
<line x1="609.00" y1="363.60" x2="725.40" y2="363.60" stroke="#d80000" stroke-width="0.9" />
<circle cx="612.6" cy="363.6" r="0.9" fill="#ff0000"/><circle cx="721.2" cy="363.6" r="0.9" fill="#ff0000"/>
<text x="658.40" y="354.20" fill="#e00000" text-anchor="start" style="font-size:5.2px;" >chan1</text>
<rect x="586.20" y="406.40" width="73.40" height="4.60" fill="#303030" stroke="#474747" stroke-width="0.5" />
<rect x="663.80" y="406.40" width="73.20" height="4.60" fill="#303030" stroke="#474747" stroke-width="0.5" />
<rect x="586.20" y="412.60" width="140.30" height="8.60" fill="#303134" stroke="#5e5f63" stroke-width="0.7" />
<text x="587.60" y="419.20" fill="#e2e2e2" text-anchor="start" class="m" style="font-size:6.2px;" >AV_synth1</text>
<rect x="727.60" y="412.60" width="9.40" height="8.60" fill="#303134" stroke="#5e5f63" stroke-width="0.7" />
<path d="M732.2 415.2 V418.8 M730.4 417 H734" fill="none" stroke="#77787c" stroke-width="0.7" />
</g>
<g id="topbars">
<rect x="0.00" y="0.00" width="1024.00" height="12.30" fill="#ffffff" />
<rect x="5.40" y="1.80" width="8.50" height="8.00" fill="#6e7d4c" />
<path d="M5.8 2.2 L13.5 9.4 M13.5 2.2 L5.8 9.4 M9.65 1.8 V9.8 M5.4 5.8 H13.9" fill="none" stroke="#2c331b" stroke-width="1.1" />
<rect x="5.40" y="1.80" width="8.50" height="8.00" fill="none" stroke="#4a5632" stroke-width="0.8" />
<circle cx="9.65" cy="5.8" r="1.7" fill="#e4e6dc"/>
<text x="17.00" y="8.90" fill="#151515" text-anchor="start" class="l" style="font-size:6.6px;" textLength="206" lengthAdjust="spacingAndGlyphs">TouchDesigner 2020.20020: G:/TEMP/TD_Scene/AV_Synth/AV_Synth.7.toe*</text>
<line x1="960.00" y1="5.70" x2="965.00" y2="5.70" stroke="#222" stroke-width="0.7" />
<rect x="983.80" y="4.00" width="3.80" height="3.80" fill="none" stroke="#222" stroke-width="0.7" />
<path d="M985 4 V3 H988.8 V6.8 H987.6" fill="none" stroke="#222" stroke-width="0.6" />
<path d="M1008 3.3 L1013 8.3 M1013 3.3 L1008 8.3" fill="none" stroke="#222" stroke-width="0.7" />
<rect x="4.00" y="12.50" width="1020.00" height="13.00" fill="#2c2e34" />
<rect x="4.00" y="25.50" width="1020.00" height="12.50" fill="#2a2c31" />
<line x1="4.00" y1="12.80" x2="1024.00" y2="12.80" stroke="#202125" stroke-width="1" />
<text x="10.50" y="21.30" fill="#a8abb3" text-anchor="start" style="font-size:6.3px;" textLength="9.3">File</text>
<text x="31.00" y="21.30" fill="#a8abb3" text-anchor="start" style="font-size:6.3px;" textLength="11.2">Edit</text>
<text x="52.00" y="21.30" fill="#a8abb3" text-anchor="start" style="font-size:6.3px;" textLength="21.5">Dialogs</text>
<text x="83.00" y="21.30" fill="#a8abb3" text-anchor="start" style="font-size:6.3px;" textLength="13.2">Help</text>
<rect x="102.00" y="14.30" width="52.00" height="9.00" fill="#363941" stroke="#4d515b" stroke-width="0.7" />
<text x="115.25" y="21.00" fill="#a8abb3" text-anchor="start" style="font-size:6.0px;" textLength="25.5">[ WIKI ]</text>
<rect x="156.00" y="14.30" width="53.00" height="9.00" fill="#363941" stroke="#4d515b" stroke-width="0.7" />
<text x="167.25" y="21.00" fill="#a8abb3" text-anchor="start" style="font-size:6.0px;" textLength="30.5">[ FORUM ]</text>
<rect x="211.00" y="14.30" width="52.00" height="9.00" fill="#363941" stroke="#4d515b" stroke-width="0.7" />
<text x="213.75" y="21.00" fill="#a8abb3" text-anchor="start" style="font-size:6.0px;" textLength="46.5">[ TUTORIALS ]</text>
<rect x="265.00" y="14.60" width="15.00" height="8.40" fill="#d98a3c" stroke="#7a5a30" stroke-width="0.6" />
<text x="272.50" y="21.00" fill="#5a2a10" text-anchor="middle" style="font-size:5.8px;font-weight:bold;" >O|I</text>
<rect x="282.00" y="14.60" width="14.00" height="8.40" fill="#33353c" stroke="#4d515b" stroke-width="0.6" />
<text x="289.00" y="21.00" fill="#5a5d66" text-anchor="middle" style="font-size:5.6px;" >60</text>
<rect x="298.50" y="14.60" width="45.00" height="8.40" fill="#363941" stroke="#4d515b" stroke-width="0.6" />
<text x="300.30" y="21.00" fill="#a8abb3" text-anchor="start" style="font-size:6.0px;" >FPS:  60</text>
<rect x="346.00" y="15.70" width="6.00" height="6.00" fill="#2a2c31" stroke="#aeb2ba" stroke-width="0.7" />
<path d="M347.3 17 L350.7 20.4 M350.7 17 L347.3 20.4" fill="none" stroke="#d0d3da" stroke-width="0.9" />
<text x="356.00" y="21.00" fill="#a8abb3" text-anchor="start" style="font-size:5.8px;" >Realtime</text>
<rect x="388.00" y="14.30" width="579.00" height="9.00" fill="#484c56" stroke="#5a5e69" stroke-width="0.6" />
<text x="390.30" y="21.00" fill="#b4b8c2" text-anchor="start" style="font-size:6.0px;" textLength="105.5">22:34:24 Message: 1 node pasted.</text>
<rect x="969.10" y="14.30" width="53.50" height="9.20" fill="#25272c" />
<rect x="970.20" y="15.10" width="51.10" height="7.70" fill="#2d8639" />
<text x="979.00" y="21.10" fill="#7cba88" text-anchor="start" style="font-size:6.1px;" textLength="34">[ UPDATE ]</text>
<rect x="6.00" y="27.00" width="10.00" height="9.60" fill="#363941" stroke="#50545e" stroke-width="0.7" />
<rect x="17.70" y="27.00" width="10.30" height="9.60" fill="#363941" stroke="#50545e" stroke-width="0.7" />
<rect x="8.30" y="29.30" width="5.70" height="5.10" fill="none" stroke="#b6bac6" stroke-width="0.7" />
<path d="M8.6 33.4 L10.2 31.4 L11.4 32.4 L13.7 30.4" fill="none" stroke="#b6bac6" stroke-width="0.6" />
<rect x="9.40" y="28.80" width="3.20" height="1.00" fill="#b6bac6" />
<path d="M22.2 28.8 H23.4 V31 H24.8 L22.8 33 L20.8 31 H22.2 Z M19.2 32.6 L22.8 34 L26.4 32.6 L25.2 35 H20.4 Z" fill="#b8bcc8" />
<line x1="34.40" y1="28.00" x2="34.40" y2="36.00" stroke="#6a6e78" stroke-width="0.7" />
<text x="42.60" y="34.20" fill="#a8abb3" text-anchor="start" style="font-size:6.0px;" textLength="37.1">Pane Layout</text>
<rect x="85.00" y="27.00" width="11.30" height="9.60" fill="#363941" stroke="#50545e" stroke-width="0.7" />
<rect x="98.60" y="27.00" width="10.70" height="9.60" fill="#363941" stroke="#50545e" stroke-width="0.7" />
<rect x="111.30" y="27.00" width="11.20" height="9.60" fill="#363941" stroke="#50545e" stroke-width="0.7" />
<rect x="124.50" y="27.00" width="11.50" height="9.60" fill="#363941" stroke="#50545e" stroke-width="0.7" />
<rect x="138.00" y="27.00" width="11.50" height="9.60" fill="#363941" stroke="#50545e" stroke-width="0.7" />
<line x1="104.00" y1="27.00" x2="104.00" y2="36.60" stroke="#50545e" stroke-width="0.7" />
<line x1="111.30" y1="31.80" x2="122.50" y2="31.80" stroke="#50545e" stroke-width="0.7" />
<line x1="130.00" y1="27.00" x2="130.00" y2="36.60" stroke="#50545e" stroke-width="0.7" />
<line x1="130.00" y1="31.80" x2="136.00" y2="31.80" stroke="#50545e" stroke-width="0.7" />
<line x1="143.70" y1="27.00" x2="143.70" y2="36.60" stroke="#50545e" stroke-width="0.7" />
<line x1="138.00" y1="31.80" x2="149.50" y2="31.80" stroke="#50545e" stroke-width="0.7" />
<line x1="156.00" y1="28.00" x2="156.00" y2="36.00" stroke="#6a6e78" stroke-width="0.7" />
<text x="166.20" y="34.20" fill="#a8abb3" text-anchor="start" style="font-size:6.0px;" textLength="35">New Layout</text>
<rect x="205.50" y="27.00" width="9.50" height="9.60" fill="#363941" stroke="#50545e" stroke-width="0.7" />
<path d="M210.2 29.3 V34.3 M207.7 31.8 H212.7" fill="none" stroke="#c5c8d0" stroke-width="0.7" />
<rect x="4.00" y="38.00" width="1020.00" height="12.60" fill="#3a3d45" />
<line x1="4.00" y1="38.20" x2="1024.00" y2="38.20" stroke="#4a4d56" stroke-width="0.5" />
<line x1="4.00" y1="50.20" x2="1024.00" y2="50.20" stroke="#4b4e57" stroke-width="0.8" />
<rect x="6.00" y="39.20" width="10.00" height="10.20" fill="#303239" stroke="#494c54" stroke-width="0.7" />
<path d="M8.50 44.30 H13.50 L11.00 47.10 Z" fill="#d6d8de" />
<rect x="18.50" y="39.20" width="10.20" height="10.20" fill="#303239" stroke="#494c54" stroke-width="0.7" />
<rect x="21.20" y="42.30" width="4.80" height="5.00" fill="#c6c9d6" />
<rect x="30.40" y="39.20" width="9.80" height="10.20" fill="#303239" stroke="#494c54" stroke-width="0.7" />
<path d="M32.20 44.70 L34.60 42.00 V43.60 H37.80 V45.80 H34.60 V47.40 Z" fill="none" stroke="#c2c5d0" stroke-width="0.6" />
<rect x="42.40" y="39.20" width="9.80" height="10.20" fill="#303239" stroke="#494c54" stroke-width="0.7" />
<path d="M50.40 44.70 L48.00 42.00 V43.60 H44.80 V45.80 H48.00 V47.40 Z" fill="none" stroke="#5e626c" stroke-width="0.6" />
<rect x="54.30" y="39.20" width="10.00" height="10.20" fill="#303239" stroke="#494c54" stroke-width="0.7" />
<path d="M59.30 42.40 V47.70 M56.70 45.00 H61.90" fill="none" stroke="#aeb1bc" stroke-width="0.7" />
<rect x="66.80" y="39.20" width="10.20" height="10.20" fill="#303239" stroke="#494c54" stroke-width="0.7" />
<polygon points="71.90,41.50 72.75,43.93 75.32,43.99 73.28,45.55 74.02,48.01 71.90,46.55 69.78,48.01 70.52,45.55 68.48,43.99 71.05,43.93" fill="#e4e6ea"/>
<rect x="79.00" y="39.20" width="10.20" height="10.20" fill="#303239" stroke="#494c54" stroke-width="0.7" />
<path d="M81.50 44.90 L84.10 41.90 L86.70 44.90 V47.30 H81.50 Z" fill="none" stroke="#e4e6ea" stroke-width="0.8" />
<rect x="83.30" y="45.30" width="1.60" height="2.00" fill="#e4e6ea" />
<text x="92.00" y="47.00" fill="#a8abb3" text-anchor="start" style="font-size:6.3px;" textLength="88.5">/ project1 / AV_synth1 / &gt;&gt;</text>
<rect x="520.70" y="39.20" width="8.80" height="10.20" fill="#303239" stroke="#494c54" stroke-width="0.7" />
<text x="525.10" y="47.00" fill="#c5c8d0" text-anchor="middle" style="font-size:6.4px;" >0</text>
<rect x="531.70" y="39.20" width="10.30" height="10.20" fill="#303239" stroke="#494c54" stroke-width="0.7" />
<rect x="534.35" y="42.40" width="5.00" height="4.90" fill="none" stroke="#e4e6ea" stroke-width="0.7" />
<line x1="534.35" y1="43.20" x2="539.35" y2="43.20" stroke="#e4e6ea" stroke-width="1.1" />
<rect x="544.00" y="39.20" width="10.80" height="10.20" fill="#303239" stroke="#494c54" stroke-width="0.7" />
<path d="M548.40 41.70 H550.40 V44.50 H551.70 L549.40 47.30 L547.10 44.50 H548.40 Z" fill="none" stroke="#e4e6ea" stroke-width="0.6" />
<rect x="556.20" y="38.50" width="1.60" height="12.10" fill="#4a4a72" />
<rect x="558.50" y="39.20" width="10.80" height="10.20" fill="#303239" stroke="#494c54" stroke-width="0.7" />
<path d="M561.40 44.30 H566.40 L563.90 47.10 Z" fill="#d6d8de" />
<rect x="571.50" y="39.20" width="10.00" height="10.20" fill="#303239" stroke="#494c54" stroke-width="0.7" />
<rect x="574.10" y="42.30" width="4.80" height="5.00" fill="#c6c9d6" />
<rect x="583.70" y="39.20" width="10.00" height="10.20" fill="#303239" stroke="#494c54" stroke-width="0.7" />
<path d="M585.60 44.70 L588.00 42.00 V43.60 H591.20 V45.80 H588.00 V47.40 Z" fill="none" stroke="#c2c5d0" stroke-width="0.6" />
<rect x="595.70" y="39.20" width="10.00" height="10.20" fill="#303239" stroke="#494c54" stroke-width="0.7" />
<path d="M603.80 44.70 L601.40 42.00 V43.60 H598.20 V45.80 H601.40 V47.40 Z" fill="none" stroke="#5e626c" stroke-width="0.6" />
<rect x="608.00" y="39.20" width="10.00" height="10.20" fill="#303239" stroke="#494c54" stroke-width="0.7" />
<path d="M613.00 42.40 V47.70 M610.40 45.00 H615.60" fill="none" stroke="#aeb1bc" stroke-width="0.7" />
<rect x="620.00" y="39.20" width="10.00" height="10.20" fill="#303239" stroke="#494c54" stroke-width="0.7" />
<polygon points="625.00,41.50 625.85,43.93 628.42,43.99 626.38,45.55 627.12,48.01 625.00,46.55 622.88,48.01 623.62,45.55 621.58,43.99 624.15,43.93" fill="#e4e6ea"/>
<rect x="632.50" y="39.20" width="10.00" height="10.20" fill="#303239" stroke="#494c54" stroke-width="0.7" />
<path d="M634.90 44.90 L637.50 41.90 L640.10 44.90 V47.30 H634.90 Z" fill="none" stroke="#e4e6ea" stroke-width="0.8" />
<rect x="636.70" y="45.30" width="1.60" height="2.00" fill="#e4e6ea" />
<text x="645.70" y="47.00" fill="#a8abb3" text-anchor="start" style="font-size:6.3px;" textLength="48.5">/ project1 / &gt;&gt;</text>
<rect x="987.50" y="39.20" width="10.00" height="10.20" fill="#303239" stroke="#494c54" stroke-width="0.7" />
<text x="992.50" y="47.00" fill="#c5c8d0" text-anchor="middle" style="font-size:6.4px;" >0</text>
<rect x="999.30" y="39.20" width="10.00" height="10.20" fill="#303239" stroke="#494c54" stroke-width="0.7" />
<rect x="1001.80" y="42.40" width="5.00" height="4.90" fill="none" stroke="#e4e6ea" stroke-width="0.7" />
<line x1="1001.80" y1="43.20" x2="1006.80" y2="43.20" stroke="#e4e6ea" stroke-width="1.1" />
<rect x="1011.50" y="39.20" width="10.20" height="10.20" fill="#303239" stroke="#494c54" stroke-width="0.7" />
<path d="M1015.60 41.70 H1017.60 V44.50 H1018.90 L1016.60 47.30 L1014.30 44.50 H1015.60 Z" fill="none" stroke="#e4e6ea" stroke-width="0.6" />
<rect x="0.00" y="0.00" width="4.20" height="352.50" fill="#000" />
<rect x="0.00" y="352.50" width="4.20" height="225.50" fill="#f0f0f0" />
<rect x="0.00" y="362.00" width="3.40" height="120.00" fill="#c4c4c4" />
</g>
<g id="params">
<rect x="760.50" y="50.60" width="263.50" height="378.70" fill="#2a2a2c" />
<rect x="761.70" y="50.60" width="262.30" height="378.00" fill="#414141" />
<rect x="761.70" y="50.60" width="262.30" height="13.00" fill="#242424" />
<rect x="801.00" y="52.00" width="220.80" height="11.00" fill="#2c2c2c" />
<text x="764.40" y="61.00" fill="#f2f2f2" text-anchor="start" style="font-size:6.0px;font-weight:bold;" >Container</text>
<text x="803.50" y="60.60" fill="#d8d8d8" text-anchor="start" class="m" style="font-size:6.4px;" >AV_synth1</text>
<rect x="761.70" y="63.60" width="262.30" height="12.70" fill="#242424" />
<text x="767.00" y="73.60" fill="#f4f4f4" text-anchor="middle" style="font-size:9px;font-weight:bold;" >?</text>
<rect x="774.30" y="65.40" width="9.50" height="9.40" fill="#3572a5" />
<rect x="774.30" y="70.60" width="9.50" height="4.20" fill="#f2c63e" />
<text x="779.00" y="73.60" fill="#f4f4f4" text-anchor="middle" style="font-size:9px;font-weight:bold;" >?</text>
<text x="790.40" y="73.60" fill="#f4f4f4" text-anchor="middle" style="font-size:9px;font-weight:bold;" >i</text>
<path d="M955.2 72.6 L956 70.3 L960 66.6 L961.6 68.2 L957.6 72 Z" fill="#8a8a8a" />
<ellipse cx="969.6" cy="69.6" rx="4" ry="2.6" fill="#8a8a8a"/>
<path d="M966.6 71 L965.8 73.2 L968.6 71.8 Z" fill="#8a8a8a" />
<path d="M977.4 72.2 L980.4 66.6 L985.6 68.4 L982.8 74 Z" fill="#1c1c1c" stroke="#f0f0f0" stroke-width="0.9" />
<path d="M981.6 66.8 L982.2 65.6 L984.6 66.4 L984.2 67.6" fill="#1c1c1c" stroke="#f0f0f0" stroke-width="0.7" />
<circle cx="993" cy="70.2" r="4.6" fill="#f2f2f2"/>
<path d="M990.2 70.2 V68.2 Q990.2 66.6 991.8 66.6 H994 Q995.2 66.6 995.2 68 V69.4 Q995.2 70.2 994.2 70.2 Z" fill="#3b74b0" />
<path d="M995.8 70.2 V72.2 Q995.8 73.8 994.2 73.8 H992 Q990.8 73.8 990.8 72.4 V71 Q990.8 70.2 991.8 70.2 Z" fill="#f2c230" />
<path d="M1004.7 66.3 V74.3 M1000.7 70.3 H1008.7" fill="none" stroke="#f4f4f4" stroke-width="1.7" />
<circle cx="1016.6" cy="70.3" r="4.1" fill="none" stroke="#f0f0f0" stroke-width="1"/>
<circle cx="1016.6" cy="70.3" r="2.1" fill="none" stroke="#f0f0f0" stroke-width="0.9"/>
<text x="767.30" y="86.60" fill="#bcbcbc" text-anchor="start" style="font-size:6.1px;" >Layout</text>
<text x="795.60" y="86.60" fill="#bcbcbc" text-anchor="start" style="font-size:6.1px;" >Panel</text>
<text x="820.00" y="86.60" fill="#bcbcbc" text-anchor="start" style="font-size:6.1px;" >Look</text>
<text x="842.30" y="86.60" fill="#bcbcbc" text-anchor="start" style="font-size:6.1px;" >Children</text>
<text x="875.30" y="86.60" fill="#bcbcbc" text-anchor="start" style="font-size:6.1px;" >Drag/Drop</text>
<text x="915.60" y="86.60" fill="#bcbcbc" text-anchor="start" style="font-size:6.1px;" >Extensions</text>
<text x="956.00" y="86.60" fill="#e2e2e2" text-anchor="start" style="font-size:6.1px;" >Common</text>
<line x1="763.50" y1="90.30" x2="1021.50" y2="90.30" stroke="#8c8c8c" stroke-width="0.7" />
<line x1="952.20" y1="89.80" x2="987.30" y2="89.80" stroke="#f4f4f4" stroke-width="1.2" />
<text x="767.30" y="99.40" fill="#bcbcbc" text-anchor="start" style="font-size:6.1px;" >Custom</text>
<line x1="763.50" y1="103.40" x2="1021.50" y2="103.40" stroke="#a8a8a8" stroke-width="0.7" />
<text x="855.80" y="114.10" fill="#bebebe" text-anchor="end" style="font-size:6.15px;" >Parent Shortcut</text>
<rect x="858.10" y="106.20" width="163.70" height="10.60" fill="#afafaf" />
<text x="855.80" y="125.90" fill="#bebebe" text-anchor="end" style="font-size:6.15px;" >Global OP Shortcut</text>
<rect x="858.10" y="118.00" width="163.70" height="10.60" fill="#afafaf" />
<line x1="762.00" y1="133.00" x2="1024.00" y2="133.00" stroke="#3c3c3c" stroke-width="0.8" />
<text x="855.80" y="143.40" fill="#bebebe" text-anchor="end" style="font-size:6.15px;" >Internal OP Shortcut 1</text>
<rect x="858.10" y="135.50" width="163.70" height="10.60" fill="#afafaf" />
<text x="855.80" y="155.20" fill="#bebebe" text-anchor="end" style="font-size:6.15px;" >Internal OP</text>
<rect x="858.10" y="147.30" width="152.90" height="10.60" fill="#afafaf" />
<path d="M1011.9 147.30 L1013.6 147.30 L1017.6 150.80 M1011.7 148.60 L1012.9 148.60 L1016.3 151.70" fill="none" stroke="#1a1a1a" stroke-width="0.7" />
<path d="M1019.3 149.40 L1021.8 155.50 L1015.1 153.20 Z" fill="#6a6a6a" stroke="#1a1a1a" stroke-width="0.8" />
<rect x="859.00" y="159.40" width="11.30" height="9.40" fill="#6c6c6c" />
<text x="864.65" y="166.20" fill="#cfcfcf" text-anchor="middle" style="font-size:5.8px;" >+</text>
<rect x="872.80" y="159.40" width="11.20" height="9.40" fill="#6c6c6c" />
<text x="878.40" y="166.20" fill="#cfcfcf" text-anchor="middle" style="font-size:5.8px;" >-</text>
<line x1="762.00" y1="173.00" x2="1024.00" y2="173.00" stroke="#3c3c3c" stroke-width="0.8" />
<text x="855.80" y="184.40" fill="#bebebe" text-anchor="end" style="font-size:6.15px;" >Node View</text>
<rect x="858.10" y="177.00" width="163.70" height="9.70" fill="#6a6a6a" />
<text x="861.50" y="184.00" fill="#d0d0d0" text-anchor="start" style="font-size:6.15px;" >Operator Viewer</text>
<path d="M1015.6 180.7 H1020.4 L1018 183.4 Z" fill="#e8e8e8" />
<text x="855.80" y="196.10" fill="#bebebe" text-anchor="end" style="font-size:6.15px;" >Operator Viewer</text>
<rect x="858.10" y="188.20" width="152.90" height="10.60" fill="#afafaf" />
<text x="859.60" y="195.60" fill="#111" text-anchor="start" class="m" style="font-size:6.3px;" >./audiodevout1</text>
<path d="M1011.9 188.20 L1013.6 188.20 L1017.6 191.70 M1011.7 189.50 L1012.9 189.50 L1016.3 192.60" fill="none" stroke="#1a1a1a" stroke-width="0.7" />
<path d="M1019.3 190.30 L1021.8 196.40 L1015.1 194.10 Z" fill="#6a6a6a" stroke="#1a1a1a" stroke-width="0.8" />
<text x="855.80" y="207.70" fill="#bebebe" text-anchor="end" style="font-size:6.15px;" >Keep in Memory</text>
<rect x="858.70" y="200.20" width="25.30" height="9.80" fill="#323232" />
<rect x="871.60" y="200.50" width="12.10" height="9.20" fill="#5a5a5f" />
<text x="865.00" y="207.30" fill="#e0e0e0" text-anchor="middle" style="font-size:5.8px;" >Off</text>
<line x1="762.00" y1="214.00" x2="1024.00" y2="214.00" stroke="#3c3c3c" stroke-width="0.8" />
<text x="855.80" y="225.10" fill="#bebebe" text-anchor="end" style="font-size:6.15px;" >Enable Cloning</text>
<rect x="858.70" y="217.60" width="25.30" height="9.80" fill="#8a8a8a" />
<rect x="858.70" y="217.60" width="12.60" height="9.80" fill="#868686" />
<rect x="871.30" y="218.10" width="12.30" height="8.80" fill="#e9e9e9" />
<text x="877.70" y="224.70" fill="#111" text-anchor="middle" style="font-size:5.8px;" >On</text>
<rect x="886.60" y="217.80" width="25.40" height="9.40" fill="#6c6c6c" />
<text x="899.30" y="224.60" fill="#cfcfcf" text-anchor="middle" style="font-size:5.8px;" >Clone</text>
<text x="855.80" y="236.90" fill="#bebebe" text-anchor="end" style="font-size:6.15px;" >Clone Master</text>
<rect x="858.10" y="229.00" width="152.90" height="10.60" fill="#afafaf" />
<path d="M1011.9 229.00 L1013.6 229.00 L1017.6 232.50 M1011.7 230.30 L1012.9 230.30 L1016.3 233.40" fill="none" stroke="#1a1a1a" stroke-width="0.7" />
<path d="M1019.3 231.10 L1021.8 237.20 L1015.1 234.90 Z" fill="#6a6a6a" stroke="#1a1a1a" stroke-width="0.8" />
<line x1="762.00" y1="243.20" x2="1024.00" y2="243.20" stroke="#3c3c3c" stroke-width="0.8" />
<text x="855.80" y="254.60" fill="#bebebe" text-anchor="end" style="font-size:6.15px;" >Load on Demand</text>
<rect x="858.70" y="247.10" width="25.30" height="9.80" fill="#323232" />
<rect x="871.60" y="247.40" width="12.10" height="9.20" fill="#5a5a5f" />
<text x="865.00" y="254.20" fill="#e0e0e0" text-anchor="middle" style="font-size:5.8px;" >Off</text>
<text x="855.80" y="266.40" fill="#bebebe" text-anchor="end" style="font-size:6.15px;" >External .tox</text>
<rect x="858.10" y="258.50" width="152.90" height="10.60" fill="#afafaf" />
<path d="M1017.2 259.8 V268 M1013.1 263.9 H1021.3" fill="none" stroke="#f4f4f4" stroke-width="2" />
<text x="855.80" y="278.10" fill="#6c6c6c" text-anchor="end" style="font-size:6.15px;" >Reload .tox on Start</text>
<rect x="871.30" y="270.60" width="12.70" height="9.80" fill="#5e5e5e" stroke="#6a6a6a" stroke-width="0.5" />
<text x="877.70" y="277.70" fill="#7c7c7c" text-anchor="middle" style="font-size:5.8px;" >On</text>
<text x="855.80" y="289.70" fill="#bebebe" text-anchor="end" style="font-size:6.15px;" >Reload Custom Parameters</text>
<rect x="858.70" y="282.20" width="25.30" height="9.80" fill="#8a8a8a" />
<rect x="858.70" y="282.20" width="12.60" height="9.80" fill="#868686" />
<rect x="871.30" y="282.70" width="12.30" height="8.80" fill="#e9e9e9" />
<text x="877.70" y="289.30" fill="#111" text-anchor="middle" style="font-size:5.8px;" >On</text>
<text x="855.80" y="301.40" fill="#bebebe" text-anchor="end" style="font-size:6.15px;" >Reload Built-In Parameters</text>
<rect x="858.70" y="293.90" width="25.30" height="9.80" fill="#8a8a8a" />
<rect x="858.70" y="293.90" width="12.60" height="9.80" fill="#868686" />
<rect x="871.30" y="294.40" width="12.30" height="8.80" fill="#e9e9e9" />
<text x="877.70" y="301.00" fill="#111" text-anchor="middle" style="font-size:5.8px;" >On</text>
<text x="855.80" y="313.00" fill="#6c6c6c" text-anchor="end" style="font-size:6.15px;" >Save Backup of External</text>
<rect x="871.30" y="305.50" width="12.70" height="9.80" fill="#5e5e5e" stroke="#6a6a6a" stroke-width="0.5" />
<text x="877.70" y="312.60" fill="#7c7c7c" text-anchor="middle" style="font-size:5.8px;" >On</text>
<text x="855.80" y="325.20" fill="#6c6c6c" text-anchor="end" style="font-size:6.15px;" >Sub-Component to Load</text>
<text x="855.80" y="336.70" fill="#bebebe" text-anchor="end" style="font-size:6.15px;" >Re-Init Network</text>
<rect x="859.00" y="329.40" width="25.00" height="9.40" fill="#6c6c6c" />
<text x="871.50" y="336.20" fill="#cfcfcf" text-anchor="middle" style="font-size:5.8px;" >Re-Init</text>
</g>
<g id="timeline">
<rect x="4.20" y="526.00" width="1019.80" height="48.00" fill="#303237" />
<line x1="4.20" y1="526.40" x2="1024.00" y2="526.40" stroke="#47484c" stroke-width="1" />
<rect x="5.20" y="527.40" width="146.20" height="45.40" fill="#0b0916" stroke="#4a4b50" stroke-width="1.2" />
<rect x="6.60" y="529.00" width="143.80" height="6.60" fill="#1c1c28" />
<line x1="6.20" y1="535.90" x2="150.80" y2="535.90" stroke="#3e3f45" stroke-width="0.7" />
<text x="10.00" y="543.60" fill="#8e9098" text-anchor="start" style="font-size:5.7px;" >Start:</text>
<text x="41.70" y="543.60" fill="#88a8e8" text-anchor="start" style="font-size:5.7px;" >1</text>
<text x="78.70" y="543.60" fill="#8e9098" text-anchor="start" style="font-size:5.7px;" >End:</text>
<text x="110.50" y="543.60" fill="#88a8e8" text-anchor="start" style="font-size:5.7px;" >600</text>
<text x="10.00" y="551.60" fill="#8e9098" text-anchor="start" style="font-size:5.7px;" >RStart:</text>
<text x="41.70" y="551.60" fill="#88a8e8" text-anchor="start" style="font-size:5.7px;" >1</text>
<text x="78.70" y="551.60" fill="#8e9098" text-anchor="start" style="font-size:5.7px;" >REnd:</text>
<text x="110.50" y="551.60" fill="#88a8e8" text-anchor="start" style="font-size:5.7px;" >600</text>
<text x="10.00" y="559.70" fill="#8e9098" text-anchor="start" style="font-size:5.7px;" >FPS:</text>
<text x="41.70" y="559.70" fill="#88a8e8" text-anchor="start" style="font-size:5.7px;" >60.0</text>
<text x="78.70" y="559.70" fill="#8e9098" text-anchor="start" style="font-size:5.7px;" >Tempo:</text>
<text x="110.50" y="559.70" fill="#88a8e8" text-anchor="start" style="font-size:5.7px;" >120.0</text>
<text x="10.00" y="567.80" fill="#8e9098" text-anchor="start" style="font-size:5.7px;" >ResetF:</text>
<text x="41.70" y="567.80" fill="#88a8e8" text-anchor="start" style="font-size:5.7px;" >1</text>
<text x="78.70" y="567.80" fill="#8e9098" text-anchor="start" style="font-size:5.7px;" >T Sig:</text>
<text x="110.50" y="567.80" fill="#88a8e8" text-anchor="start" style="font-size:5.7px;" >4</text>
<text x="129.00" y="567.80" fill="#88a8e8" text-anchor="start" style="font-size:5.7px;" >4</text>
<rect x="152.70" y="526.40" width="871.30" height="6.90" fill="#0a0a0a" />
<line x1="152.60" y1="526.40" x2="152.60" y2="533.30" stroke="#8a8c92" stroke-width="0.8" />
<text x="153.90" y="532.20" fill="#b4b6bc" text-anchor="start" style="font-size:5.4px;" >1</text>
<line x1="225.30" y1="526.40" x2="225.30" y2="533.30" stroke="#8a8c92" stroke-width="0.8" />
<text x="226.60" y="532.20" fill="#b4b6bc" text-anchor="start" style="font-size:5.4px;" >51</text>
<line x1="298.00" y1="526.40" x2="298.00" y2="533.30" stroke="#8a8c92" stroke-width="0.8" />
<text x="299.30" y="532.20" fill="#b4b6bc" text-anchor="start" style="font-size:5.4px;" >101</text>
<line x1="370.70" y1="526.40" x2="370.70" y2="533.30" stroke="#8a8c92" stroke-width="0.8" />
<text x="372.00" y="532.20" fill="#b4b6bc" text-anchor="start" style="font-size:5.4px;" >151</text>
<line x1="443.40" y1="526.40" x2="443.40" y2="533.30" stroke="#8a8c92" stroke-width="0.8" />
<text x="444.70" y="532.20" fill="#b4b6bc" text-anchor="start" style="font-size:5.4px;" >201</text>
<line x1="516.10" y1="526.40" x2="516.10" y2="533.30" stroke="#8a8c92" stroke-width="0.8" />
<text x="517.40" y="532.20" fill="#b4b6bc" text-anchor="start" style="font-size:5.4px;" >251</text>
<line x1="588.80" y1="526.40" x2="588.80" y2="533.30" stroke="#8a8c92" stroke-width="0.8" />
<text x="590.10" y="532.20" fill="#b4b6bc" text-anchor="start" style="font-size:5.4px;" >301</text>
<line x1="661.50" y1="526.40" x2="661.50" y2="533.30" stroke="#8a8c92" stroke-width="0.8" />
<text x="662.80" y="532.20" fill="#b4b6bc" text-anchor="start" style="font-size:5.4px;" >351</text>
<line x1="734.20" y1="526.40" x2="734.20" y2="533.30" stroke="#8a8c92" stroke-width="0.8" />
<text x="735.50" y="532.20" fill="#b4b6bc" text-anchor="start" style="font-size:5.4px;" >401</text>
<line x1="806.90" y1="526.40" x2="806.90" y2="533.30" stroke="#8a8c92" stroke-width="0.8" />
<text x="808.20" y="532.20" fill="#b4b6bc" text-anchor="start" style="font-size:5.4px;" >451</text>
<line x1="879.60" y1="526.40" x2="879.60" y2="533.30" stroke="#8a8c92" stroke-width="0.8" />
<text x="880.90" y="532.20" fill="#b4b6bc" text-anchor="start" style="font-size:5.4px;" >501</text>
<line x1="952.30" y1="526.40" x2="952.30" y2="533.30" stroke="#8a8c92" stroke-width="0.8" />
<text x="953.60" y="532.20" fill="#b4b6bc" text-anchor="start" style="font-size:5.4px;" >551</text>
<text x="1022.60" y="532.20" fill="#b4b6bc" text-anchor="end" style="font-size:5.4px;" >600</text>
<rect x="290.30" y="526.40" width="1.70" height="6.90" fill="#6d7390" />
<rect x="152.70" y="534.40" width="871.30" height="4.50" fill="#3d5687" />
<rect x="153.20" y="534.80" width="11.60" height="3.70" fill="#55575c" />
<rect x="1011.30" y="534.80" width="11.30" height="3.70" fill="#55575c" />
<rect x="152.70" y="539.60" width="871.30" height="22.80" fill="#323439" />
<line x1="152.70" y1="539.40" x2="1024.00" y2="539.40" stroke="#55575e" stroke-width="0.6" />
<line x1="152.70" y1="562.60" x2="1024.00" y2="562.60" stroke="#55575e" stroke-width="0.6" />
<rect x="154.40" y="541.20" width="19.80" height="19.60" fill="#3b3d43" stroke="#50525a" stroke-width="0.7" />
<text x="164.30" y="553.20" fill="#777a82" text-anchor="middle" style="font-size:5.5px;" >I</text>
<rect x="177.60" y="542.00" width="34.40" height="8.20" fill="#d9893c" stroke="#5a5c62" stroke-width="0.7" />
<text x="194.80" y="548.40" fill="#6a2a10" text-anchor="middle" style="font-size:5.9px;" >TimeCode</text>
<rect x="177.60" y="552.00" width="34.40" height="8.60" fill="#3e4046" stroke="#5a5c62" stroke-width="0.7" />
<text x="194.80" y="558.50" fill="#cfd1d6" text-anchor="middle" style="font-size:5.7px;" >Beats</text>
<rect x="214.30" y="541.20" width="104.70" height="20.00" fill="#000" stroke="#4a4c52" stroke-width="0.7" />
<text x="266.60" y="557.00" fill="#7ba7ea" text-anchor="middle" style="font-size:14px;" >00:00:01.35</text>
<rect x="321.40" y="541.20" width="70.80" height="20.00" fill="#000" stroke="#4a4c52" stroke-width="0.7" />
<text x="356.60" y="557.00" fill="#7ba7ea" text-anchor="middle" style="font-size:14px;" >96</text>
<rect x="394.30" y="541.20" width="19.30" height="19.60" fill="#3b3d43" stroke="#50525a" stroke-width="0.7" />
<rect x="415.60" y="541.20" width="19.60" height="19.60" fill="#d98d44" stroke="#b87838" stroke-width="0.7" />
<rect x="437.30" y="541.20" width="19.90" height="19.60" fill="#3b3d43" stroke="#50525a" stroke-width="0.7" />
<rect x="459.30" y="541.20" width="19.90" height="19.60" fill="#3b3d43" stroke="#50525a" stroke-width="0.7" />
<rect x="481.20" y="541.20" width="19.40" height="19.60" fill="#3b3d43" stroke="#50525a" stroke-width="0.7" />
<rect x="502.60" y="541.20" width="20.40" height="19.60" fill="#3b3d43" stroke="#50525a" stroke-width="0.7" />
<path d="M401.6 548.8 V553.2 M402.2 551 L404.2 548.8 V553.2 Z M404.4 551 L406.4 548.8 V553.2 Z" fill="#c8cad0" stroke="#c8cad0" stroke-width="0.6" />
<rect x="424.20" y="548.60" width="2.40" height="4.80" fill="#6a2412" />
<path d="M445.8 551 L448.4 549.2 V552.8 Z" fill="#c8cad0" />
<path d="M470.6 551 L468 549.2 V552.8 Z" fill="#c8cad0" />
<text x="490.90" y="553.20" fill="#b8bac0" text-anchor="middle" style="font-size:6.5px;" >-</text>
<path d="M512.8 548.6 V553.6 M510.3 551.1 H515.3" fill="none" stroke="#d0d2d8" stroke-width="0.7" />
<text x="529.50" y="547.80" fill="#c4c6cc" text-anchor="start" style="font-size:6px;" >Range Limit</text>
<rect x="525.60" y="552.60" width="21.40" height="9.00" fill="#d9893c" stroke="#5a5c62" stroke-width="0.7" />
<text x="536.30" y="559.30" fill="#6a2a10" text-anchor="middle" style="font-size:5.7px;" >Loop</text>
<rect x="548.80" y="552.60" width="23.00" height="9.00" fill="#3e4046" stroke="#5a5c62" stroke-width="0.7" />
<text x="560.30" y="559.30" fill="#cfd1d6" text-anchor="middle" style="font-size:5.7px;" >Once</text>
<rect x="152.70" y="563.00" width="871.30" height="10.20" fill="#0d0c1a" />
<rect x="153.00" y="563.60" width="8.00" height="9.20" fill="#3d5687" />
<text x="157.00" y="570.60" fill="#a8b8e0" text-anchor="middle" style="font-size:6px;" >/</text>
<text x="168.00" y="570.60" fill="#3f57a0" text-anchor="start" style="font-size:6px;font-weight:bold;" >Time Path: /</text>
<rect x="4.20" y="573.60" width="1019.80" height="4.40" fill="#000" />
<rect x="369.00" y="573.40" width="25.00" height="1.20" fill="#8a8a8a" />
</g>
</svg>
</body></html>
